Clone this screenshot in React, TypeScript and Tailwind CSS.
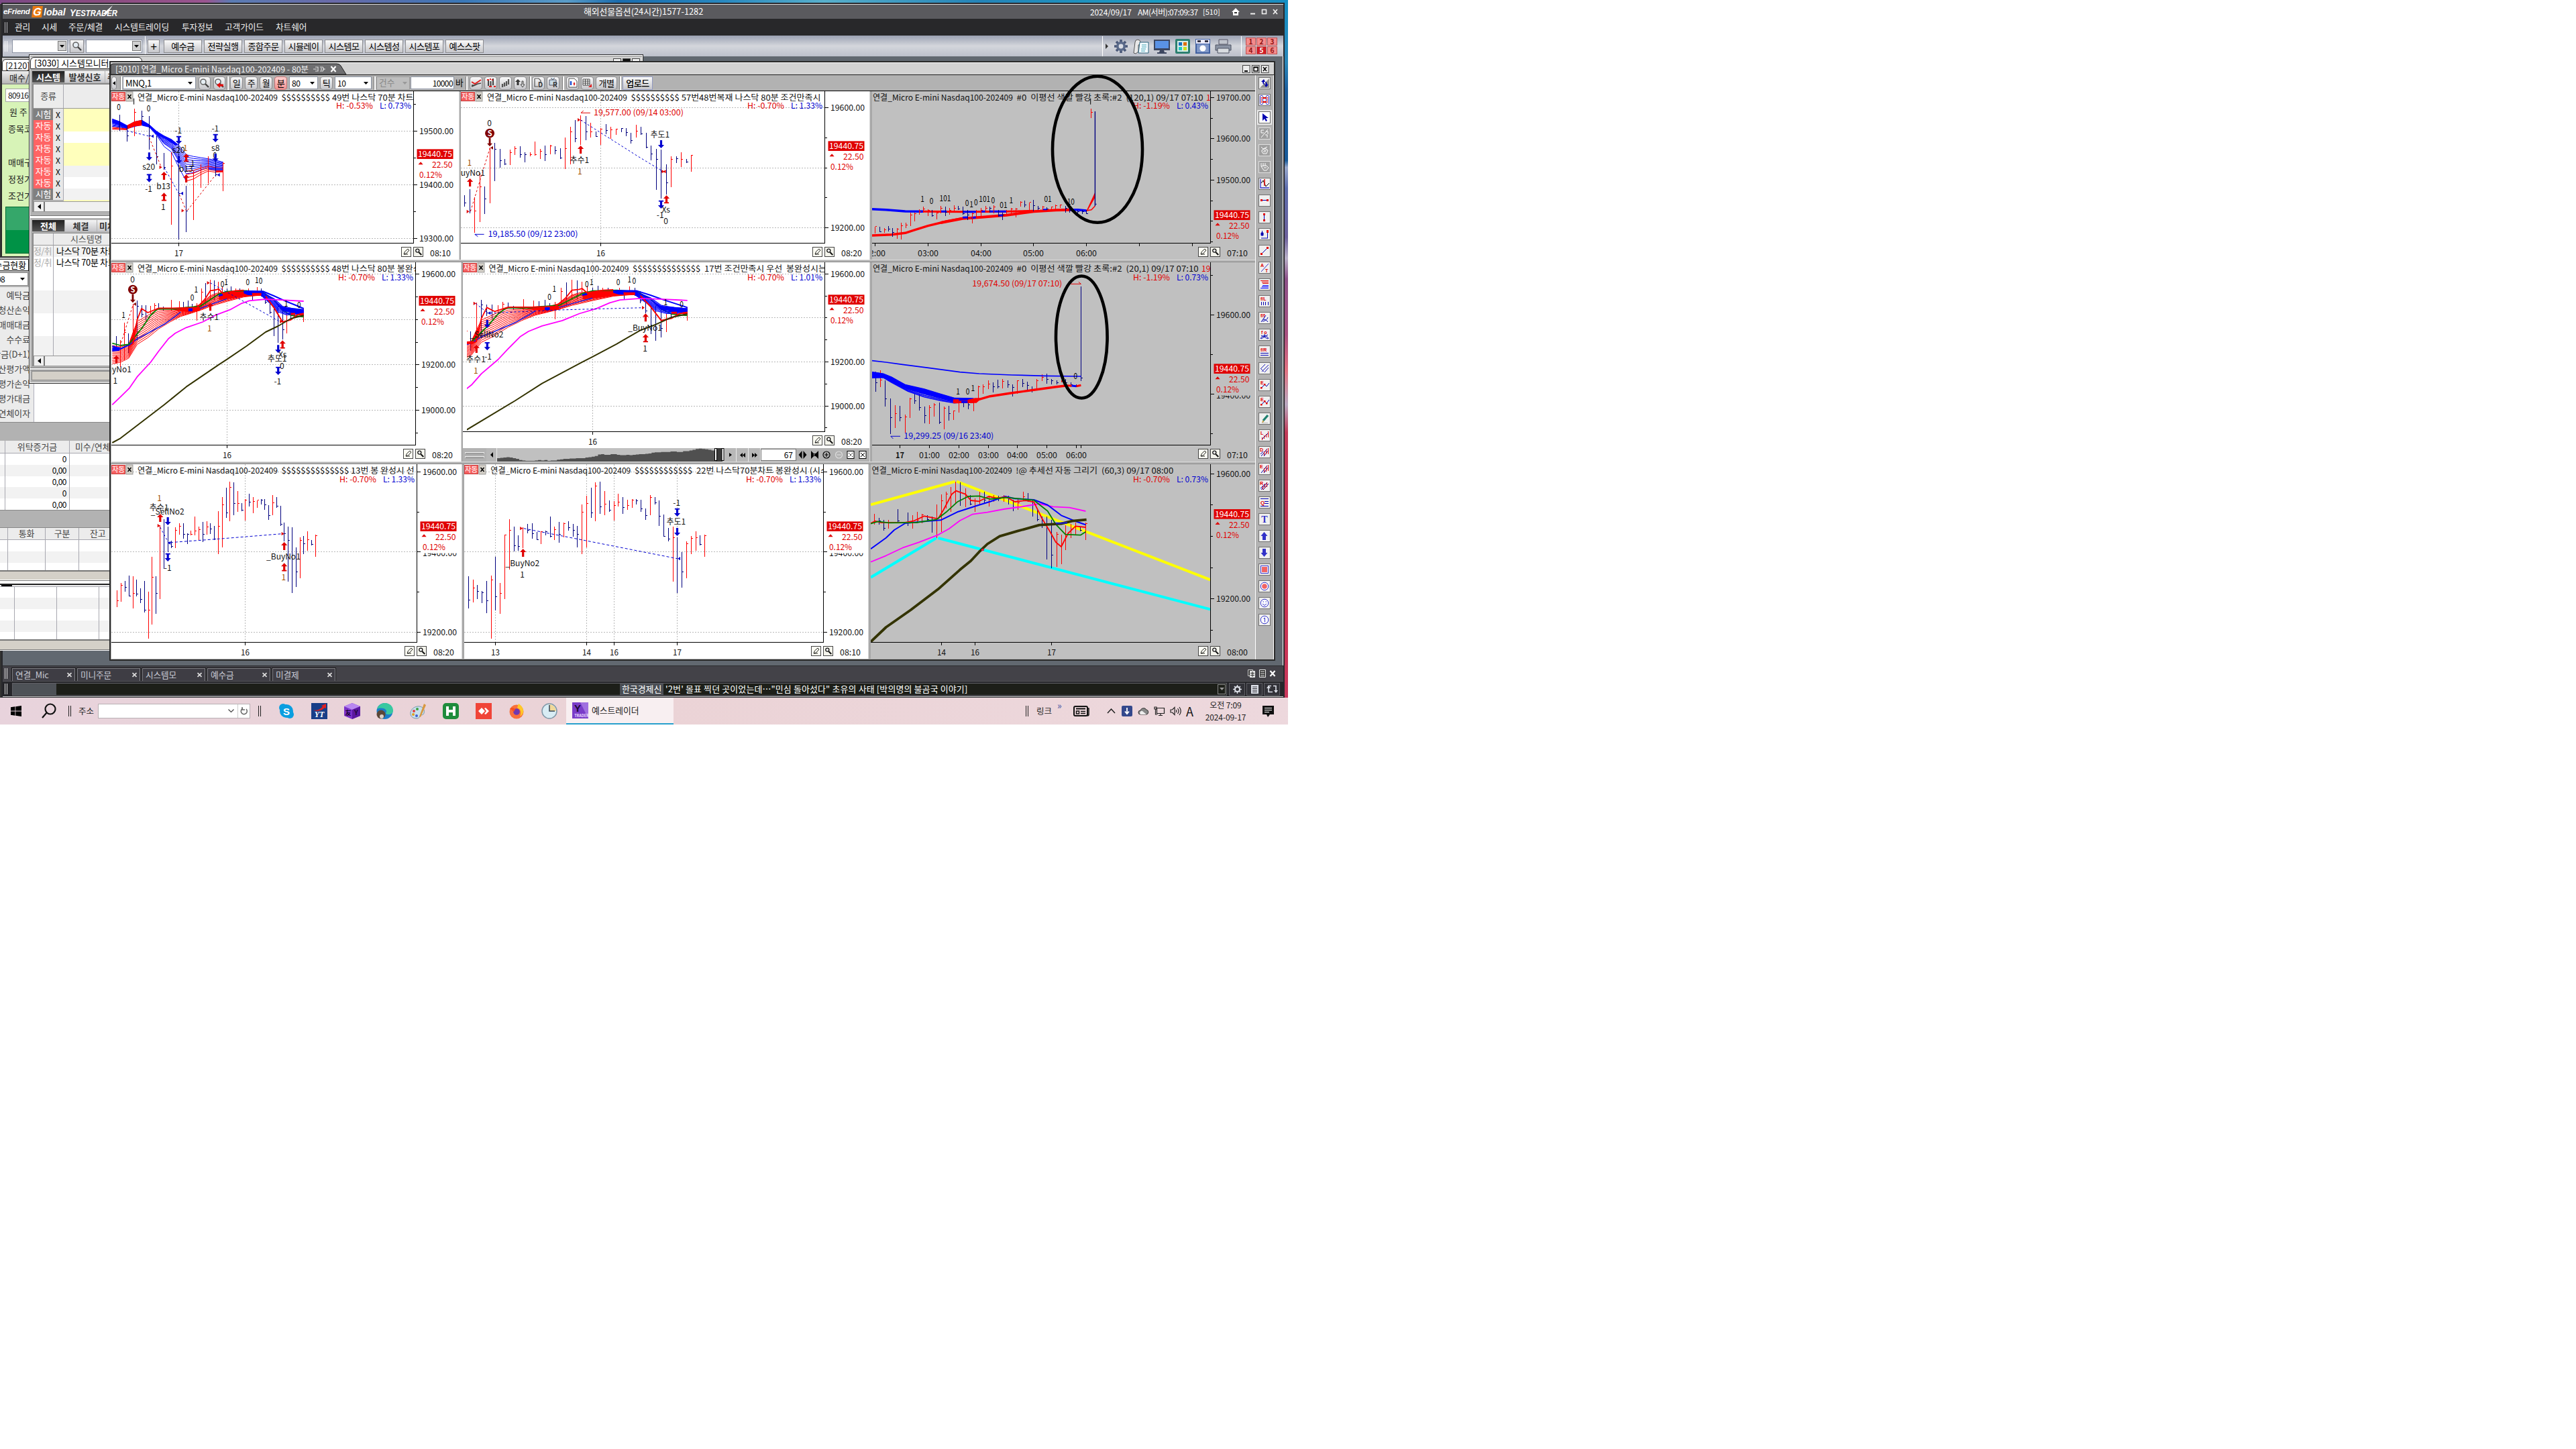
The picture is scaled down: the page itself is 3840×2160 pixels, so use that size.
import React from 'react';

/* ------------------------------------------------------------------ */
/* Plot helpers                                                        */
/* ------------------------------------------------------------------ */

type Pt = [number, number];
type Mapper = (x: number, y: number) => Pt;

const RED = '#ff0000';
const NAVY = '#00007f';
const BLUE = '#0000ff';
const MARK_RED = '#e00000';
const MARK_BLUE = '#0000d0';
const OLIVE = '#333300';
const GREEN = '#008000';
const MAGENTA = '#ff00ff';
const FONT = "'Noto Sans CJK KR', sans-serif";

const grid = (ox: number, oy: number, k: number): Mapper => (x, y) => [ox + x / k, oy + y / 3];

const pts = (s: string): Pt[] =>
  s.trim().split(/\s+/).map((p) => p.split(',').map(Number) as Pt);

const toPath = (m: Mapper, list: Pt[]) =>
  list.map(([x, y], i) => {
    const [a, b] = m(x, y);
    return `${i ? 'L' : 'M'}${a.toFixed(1)} ${b.toFixed(1)}`;
  }).join('');

function Line({ m, d, c, w = 1, dash, crisp }: { m: Mapper; d: string; c: string; w?: number; dash?: string; crisp?: boolean }) {
  return <path d={toPath(m, pts(d))} fill="none" stroke={c} strokeWidth={w} strokeDasharray={dash} strokeLinejoin="round" shapeRendering={crisp ? 'crispEdges' : undefined} />;
}

function Area({ m, d, c }: { m: Mapper; d: string; c: string }) {
  return <path d={toPath(m, pts(d)) + 'Z'} fill={c} />;
}

function yAt(list: Pt[], x: number) {
  if (x <= list[0][0]) return list[0][1];
  for (let i = 1; i < list.length; i++) {
    if (x <= list[i][0]) {
      const [x0, y0] = list[i - 1];
      const [x1, y1] = list[i];
      return y0 + ((y1 - y0) * (x - x0)) / (x1 - x0);
    }
  }
  return list[list.length - 1][1];
}

/* A ribbon of evenly spaced averages between two envelopes. */
function Fan({ m, top, bot, n, c, from = 0, to = 1, w = 1 }: { m: Mapper; top: string; bot: string; n: number; c: string; from?: number; to?: number; w?: number }) {
  const t = pts(top);
  const b = pts(bot);
  const xs = Array.from(new Set([...t, ...b].map((p) => p[0]))).sort((p, q) => p - q);
  return (
    <g>
      {Array.from({ length: n }, (_, i) => {
        const r = from + ((to - from) * i) / (n - 1);
        const list = xs.map((x) => [x, yAt(t, x) * (1 - r) + yAt(b, x) * r] as Pt);
        return <path key={i} d={toPath(m, list)} fill="none" stroke={c} strokeWidth={w} />;
      })}
    </g>
  );
}

/* "r500 567 735 590": colour + x, high, low, close */
function Bars({ m, d }: { m: Mapper; d: string }) {
  const draw = (key: string) =>
    d.split(';').map((s) => s.trim()).filter((s) => s[0] === key).map((s) => {
      const [x, hi, lo, cl] = s.slice(1).trim().split(/\s+/).map(Number);
      const [px, py] = m(x, hi);
      const [, qy] = m(x, lo);
      const fx = Math.floor(px) + 0.5;
      let out = `M${fx} ${Math.round(py)}V${Math.round(qy)}`;
      if (cl !== undefined) {
        const cy = Math.floor(m(x, cl)[1]) + 0.5;
        out += `M${fx} ${cy}h2.5`;
      }
      return out;
    }).join('');
  return (
    <g fill="none" strokeWidth="1" shapeRendering="crispEdges">
      <path d={draw('r')} stroke={RED} />
      <path d={draw('b')} stroke={NAVY} />
    </g>
  );
}

function Label({ m, x, y, t, c = '#111', len, a = 'middle', s = 12 }: { m: Mapper; x: number; y: number; t: string; c?: string; len?: number; a?: 'start' | 'middle' | 'end'; s?: number }) {
  const [px, py] = m(x, y);
  return (
    <text x={px} y={py + 4.4} fill={c} fontSize={s} textAnchor={a} textLength={len} lengthAdjust="spacingAndGlyphs">{t}</text>
  );
}

/* Thin glyph digits used for the regime flips */
function Digit({ m, x, y, t }: { m: Mapper; x: number; y: number; t: string }) {
  const [px, py] = m(x, y);
  return (
    <text x={px} y={py + 4.4} fill="#000" fontSize="12" textAnchor="middle" textLength={t.length * 5.6} lengthAdjust="spacingAndGlyphs">{t}</text>
  );
}

function Arrow({ m, x, y, up, bar, c }: { m: Mapper; x: number; y: number; up?: boolean; bar?: boolean; c?: string }) {
  const [px, py] = m(x, y);
  const color = c ?? (up ? MARK_RED : MARK_BLUE);
  return (
    <g transform={`translate(${px.toFixed(1)} ${py.toFixed(1)})${up ? '' : ' scale(1 -1)'}`} fill={color}>
      <path d="M0 -6L4.6 -1H1.6V6H-1.6V-1H-4.6Z" />
      {bar && <rect x="-3.6" y="4.4" width="7.2" height="1.8" />}
    </g>
  );
}

function Tri({ m, x, y, left, c = MARK_RED }: { m: Mapper; x: number; y: number; left?: boolean; c?: string }) {
  const [px, py] = m(x, y);
  return <path d={left ? `M${px - 2} ${py}l4 -2.6v5.2z` : `M${px + 2} ${py}l-4 -2.6v5.2z`} fill={c} />;
}

function StopMark({ m, x, y }: { m: Mapper; x: number; y: number }) {
  const [px, py] = m(x, y);
  return (
    <g>
      <circle cx={px} cy={py} r="7" fill="#800000" />
      <text x={px} y={py + 4} fontSize="11" fontWeight="700" fill="#fff" textAnchor="middle">S</text>
      <path d={`M${px - 1.4} ${py + 7}h2.8v8h2.6l-4 4.6l-4 -4.6h2.6z`} fill="#800000" />
    </g>
  );
}

/* ------------------------------------------------------------------ */
/* Chart frame                                                         */
/* ------------------------------------------------------------------ */

interface FrameProps {
  x: number; y: number; w: number; h: number;
  m: Mapper;
  gray?: boolean;
  axisX: number;
  axisY: number;
  titleX: number;
  rest: string;
  restLen: number;
  redTail?: string;
  high: string;
  low: string;
  auto?: boolean;
  majors: [number, string][];
  minors: number[];
  hidden?: number;
  price: number;
  vgrid?: number[];
  times: [number, string][];
  ticks: number[];
  end: string;
  children: React.ReactNode;
}

function Frame(p: FrameProps) {
  const ax = Math.floor(p.m(p.axisX, 0)[0]) + 0.5;
  const ay = Math.floor(p.m(0, p.axisY)[1]) + 0.5;
  const yy = (v: number) => Math.floor(p.m(0, v)[1]) + 0.5;
  const xx = (v: number) => Math.floor(p.m(v, 0)[0]) + 0.5;
  const top = p.y;
  const id = `clip${p.x}-${p.y}`;
  const bg = p.gray ? '#c0c0c0' : '#ffffff';
  const py = p.m(0, p.price)[1];
  const ty = top + (p.y > 136 ? 9.8 : 9.3);
  const iy = ay + 5.5;
  const timeY = ay + 14.8;
  return (
    <svg className="block shrink-0" width={p.w} height={p.h} viewBox={`${p.x} ${p.y} ${p.w} ${p.h}`} style={{ fontFamily: FONT }}>
      <rect x={p.x} y={p.y} width={p.w} height={p.h} fill={bg} />
      <clipPath id={id}><rect x={p.x} y={p.y} width={ax - p.x - 0.5} height={ay - p.y} /></clipPath>
      {!p.gray && (
        <g stroke="#b8b8b8" strokeDasharray="2 2" shapeRendering="crispEdges">
          {p.majors.map(([v]) => <path key={v} d={`M${p.x} ${yy(v)}H${ax}`} />)}
          {p.hidden !== undefined && <path d={`M${p.x} ${yy(p.hidden)}H${ax}`} />}
          {(p.vgrid ?? []).map((v) => <path key={v} d={`M${xx(v)} ${p.y}V${ay}`} />)}
        </g>
      )}
      <g clipPath={`url(#${id})`}>
        {p.children}
        <text x={p.titleX} y={ty + 4.4} fontSize="12" fill="#111" textLength="209" lengthAdjust="spacingAndGlyphs">연결_Micro E-mini Nasdaq100-202409</text>
        <text x={p.titleX + 214.6} y={ty + 4.4} fontSize="12" fill="#111" textLength={p.restLen} lengthAdjust="spacingAndGlyphs">{p.rest}</text>
        {p.redTail && <text x={p.titleX + 214.6 + p.restLen + 4.5} y={ty + 4.4} fontSize="12" fill={MARK_RED}>{p.redTail}</text>}
        <text x={ax - 115.5} y={ty + 17} fontSize="12" fill={MARK_RED} textLength="55" lengthAdjust="spacingAndGlyphs">{p.high}</text>
        <text x={ax - 50.5} y={ty + 17} fontSize="12" fill={MARK_BLUE} textLength="47" lengthAdjust="spacingAndGlyphs">{p.low}</text>
      </g>
      {p.auto && (
        <g>
          <rect x={p.x + 0.5} y={top + 1.5} width="20" height="13" fill="#f66060" stroke="#c84040" />
          <text x={p.x + 10.5} y={top + 12.2} fontSize="11" fill="#fff" textAnchor="middle" textLength="19" lengthAdjust="spacingAndGlyphs">자동</text>
          <rect x={p.x + 22} y={top + 1} width="10" height="14" fill="#d4d0c8" stroke="#8a8a8a" strokeWidth="0.8" />
          <path d={`M${p.x + 24.5} ${top + 5}l5 6m0 -6l-5 6`} stroke="#000" strokeWidth="1.5" />
        </g>
      )}
      <path d={`M${ax} ${p.y}V${ay}H${p.x}`} fill="none" stroke="#000" shapeRendering="crispEdges" />
      <g stroke="#000" shapeRendering="crispEdges">
        {p.majors.map(([v]) => <path key={v} d={`M${ax} ${yy(v)}h5`} />)}
        {p.hidden !== undefined && <path d={`M${ax} ${yy(p.hidden)}h5`} />}
        {p.minors.map((v) => <path key={v} d={`M${ax} ${yy(v)}h3.5`} />)}
        {p.ticks.map((v) => <path key={v} d={`M${xx(v)} ${ay}v4`} />)}
      </g>
      {p.majors.map(([v, t]) => (
        <text key={v} x={ax + 8.5} y={yy(v) + 4.6} fontSize="12" fill="#111" textLength="51" lengthAdjust="spacingAndGlyphs">{t}</text>
      ))}
      {p.hidden !== undefined && (
        <g>
          <text x={ax + 8.5} y={py + 44.3} fontSize="12" fill="#111" textLength="51" lengthAdjust="spacingAndGlyphs">19400.00</text>
          <rect x={ax + 6} y={py + 30} width="54" height="10" fill={bg} />
        </g>
      )}
      <rect x={ax + 5} y={py - 7.3} width="54" height="14.6" fill={MARK_RED} />
      <text x={ax + 6.5} y={py + 4.4} fontSize="12" fill="#fff" textLength="51" lengthAdjust="spacingAndGlyphs">19440.75</text>
      <path d={`M${ax + 7} ${py + 15.6}l3.6 -4l3.6 4z`} fill={MARK_RED} />
      <text x={ax + 58} y={py + 20.2} fontSize="12" fill={MARK_RED} textAnchor="end" textLength="30.5" lengthAdjust="spacingAndGlyphs">22.50</text>
      <text x={ax + 8.5} y={py + 35.5} fontSize="12" fill={MARK_RED} textLength="34" lengthAdjust="spacingAndGlyphs">0.12%</text>
      {p.times.map(([v, t]) => (
        <text key={v} x={xx(v)} y={timeY + 4.6} fontSize="12" fill="#111" textAnchor="middle" fontWeight={t === '17' && p.times.length > 5 ? 700 : 400} textLength={t.length > 2 ? 31 : 13} lengthAdjust="spacingAndGlyphs">{t}</text>
      ))}
      <text x={ax + 24.5} y={timeY + 4.6} fontSize="12" fill="#111" textLength="31" lengthAdjust="spacingAndGlyphs">{p.end}</text>
      <g transform={`translate(${ax - 18.5} ${iy})`}>
        <rect x="0.5" y="0.5" width="14" height="14" fill="#fffff4" stroke="#444" />
        <path d="M4 11l1.5-4L10 3l2 2-4.5 5z M4 11h6" fill="none" stroke="#222" strokeWidth="1" />
        <rect x="18.5" y="0.5" width="14" height="14" fill="#f4f4ec" stroke="#444" />
        <circle cx="24.3" cy="5.6" r="2.5" fill="#fff" stroke="#111" strokeWidth="1.3" />
        <path d="M26.3 8l4 4" stroke="#111" strokeWidth="2" />
      </g>
    </svg>
  );
}

/* ------------------------------------------------------------------ */
/* Charts                                                              */
/* ------------------------------------------------------------------ */

const B10 = '$$$$$$$$$$';

function ChartA1() {
  const m = grid(0, 0, 2.45);
  const top = '410,533 437,545 464,563 491,545 518,538 545,560 572,590 599,610 626,625 653,650 680,692 707,700 734,705 760,710 787,716 815,725';
  const bot = '410,578 437,578 464,580 491,574 518,566 545,568 572,605 599,655 626,680 653,748 680,810 707,800 734,780 760,765 787,770 815,768';
  return (
    <Frame x={166} y={136} w={518} h={251} m={m} axisX={1511} axisY={1086} titleX={205} rest={`${B10} 49번 나스닥 70분 차트`} restLen={197}
      high="H: -0.53%" low="L: 0.73%" auto majors={[[587, '19500.00'], [827, '19400.00'], [1067, '19300.00']]} minors={[466, 707, 946]} price={689}
      vgrid={[653]} times={[[653, '17']]} ticks={[653]} end="08:10">
      <Fan m={m} top={top} bot={bot} n={9} c={BLUE} to={0.72} />
      <Fan m={m} top="680,692 707,700 734,705 760,710 787,716 815,725" bot="680,810 707,800 734,780 760,765 787,770 815,768" n={4} c={RED} from={0.62} />
      <Fan m={m} top="410,533 464,563" bot="410,578 464,580" n={3} c={RED} from={0.8} />
      <Line m={m} d="545,568 572,605 599,655 626,680 653,748 680,810" c={BLUE} />
      <Area m={m} d="410,530 437,542 464,560 464,572 437,560 410,550" c={BLUE} />
      <Area m={m} d="464,560 491,543 518,536 518,562 491,565 464,578" c={RED} />
      <Area m={m} d="518,536 545,556 572,586 599,606 626,622 653,648 640,650 599,618 572,600 545,570 518,562" c={BLUE} />
      <Area m={m} d="760,748 787,750 815,752 815,762 787,762 760,758" c="#3030ff" />
      <Line m={m} d="787,767 815,766" c={RED} w={2.5} />
      <Bars m={m} d="b437 513 585;b464 560 632 607;r491 487 608 502;b518 495 555 520;b545 520 670 608;b572 605 735 700;b599 685 760 748;r626 680 1004 742;b653 640 1070 865;b680 830 1038 942;r707 765 984;r734 735 840;r760 700 820;b787 720 790 780;r815 725 855 730" />
      <Line m={m} d="489,440 489,467" c="#000" />
      <Line m={m} d="464,585 548,610" c={MARK_BLUE} dash="3 3" />
      <Line m={m} d="545,615 590,750" c={MARK_RED} dash="3 3" />
      <Line m={m} d="600,750 653,865" c={MARK_BLUE} dash="3 3" />
      <Line m={m} d="655,870 680,942" c={MARK_RED} dash="3 3" />
      <Line m={m} d="685,940 787,783" c={MARK_RED} dash="3 3" />
      <Tri m={m} x={587} y={748} /><Tri m={m} x={668} y={942} />
      <Tri m={m} x={556} y={609} left c={MARK_BLUE} /><Tri m={m} x={664} y={865} left c={MARK_BLUE} /><Tri m={m} x={798} y={782} left c={MARK_BLUE} />
      <Digit m={m} x={434} y={480} t="0" /><Digit m={m} x={543} y={486} t="0" />
      <Arrow m={m} x={545} y={700} /><Label m={m} x={543} y={746} t="s20" />
      <Arrow m={m} x={545} y={797} bar /><Label m={m} x={543} y={845} t="-1" />
      <Arrow m={m} x={599} y={786} up /><Label m={m} x={597} y={832} t="b13" />
      <Arrow m={m} x={599} y={880} up bar /><Label m={m} x={596} y={926} t="1" />
      <Label m={m} x={651} y={584} t="-1" /><Arrow m={m} x={653} y={627} bar />
      <Label m={m} x={652} y={671} t="s20" /><Label m={m} x={677} y={663} t="1" c="#c06000" />
      <Arrow m={m} x={680} y={705} up bar /><Arrow m={m} x={653} y={714} />
      <Label m={m} x={679} y={755} t="b13" /><Arrow m={m} x={680} y={798} up />
      <Label m={m} x={786} y={575} t="-1" /><Arrow m={m} x={787} y={618} bar />
      <Label m={m} x={787} y={662} t="s8" /><Digit m={m} x={785} y={695} t="0" /><Arrow m={m} x={787} y={706} />
      <Digit m={m} x={704} y={730} t="1" />
    </Frame>
  );
}

function ChartA2() {
  const m = grid(640, 0, 2.376);
  return (
    <Frame x={687} y={136} w={609} h={251} m={m} axisX={1401} axisY={1086} titleX={725.9} rest={`${B10} 57번48번복재 나스닥 80분 조건만족시`} restLen={283}
      high="H: -0.70%" low="L: 1.33%" auto majors={[[482, '19600.00'], [1018, '19200.00']]} minors={[617, 751, 883]} price={653}
      vgrid={[607]} times={[[607, '16']]} ticks={[607]} end="08:20">
      <Line m={m} d="112,751 1401,751" c="#b8b8b8" dash="2 2" crisp />
      <Bars m={m} d="b125 873 923 908;b144 845 953;r161 883 1040 943;r180 775 992 835;b197 833 957 889;r215 660 909;b232 640 809 667;b251 667 750 718;b268 710 738 733;r286 668 738 683;r304 654 692 663;b323 654 705 690;b339 680 725 692;r358 682 698 692;r375 633 695 692;r393 667 710 677;b411 652 720 690;r429 648 690 653;b446 655 690 672;b465 662 710 707;r482 615 755 663;r500 567 735 590;b517 537 635 620;r536 515 648 537;b555 520 628 590;r572 548 614 589;b591 588 613 610;r607 573 648 577;b626 556 600 582;r643 567 622 581;r662 575 603 577;b680 572 590 575;b697 572 608 592;b715 594 642 629;r733 558 615 587;b750 567 603 598;b769 595 662 659;b786 652 717 688;b804 667 849 712;b821 670 888 767;b840 736 870 818;r857 700 836 712;b876 700 730 710;r892 682 747 712;b912 710 728 725;r929 693 768 694" />
      <Line m={m} d="146,945 215,660" c={MARK_RED} dash="3 3" />
      <Line m={m} d="536,537 740,700 828,767" c={MARK_BLUE} dash="3 3" />
      <Tri m={m} x={137} y={946} /><Tri m={m} x={221} y={661} left c="#800000" /><Tri m={m} x={530} y={536} /><Tri m={m} x={828} y={767} /><Tri m={m} x={833} y={767} left />
      <Label m={m} x={142} y={727} t="1" c="#a05000" /><Label m={m} x={197} y={773} t="_BuyNo1" a="end" />
      <Arrow m={m} x={144} y={816} up />
      <Label m={m} x={213} y={550} t="0" /><StopMark m={m} x={214} y={596} />
      <Arrow m={m} x={536} y={669} up /><Label m={m} x={532} y={716} t="추수1" /><Label m={m} x={533} y={767} t="1" c="#a05000" />
      <Label m={m} x={817} y={601} t="추도1" /><Arrow m={m} x={821} y={645} />
      <Arrow m={m} x={821} y={915} bar /><Arrow m={m} x={840} y={891} up bar />
      <Label m={m} x={838} y={938} t="Xs" /><Label m={m} x={818} y={962} t="-1" /><Label m={m} x={838} y={989} t="0" />
      <Label m={m} x={582} y={504} t="19,577.00 (09/14 03:00)" c={MARK_RED} a="start" len={134} />
      <Line m={m} d="546,495 537,505 570,505" c={MARK_RED} />
      <Label m={m} x={208} y={1047} t="19,185.50 (09/12 23:00)" c={MARK_BLUE} a="start" len={134} />
      <Line m={m} d="172,1058 161,1048 194,1048" c={MARK_BLUE} />
    </Frame>
  );
}

function ChartA3() {
  const m = grid(1280, 0, 2.45);
  return (
    <Frame x={1300} y={136} w={571} h={251} m={m} gray axisX={1285} axisY={1086} titleX={1301} rest={'#0\u00a0 이평선 색깔 빨강 초록:#2\u00a0 (120,1) 09/17 07:10'} restLen={278} redTail="1"
      high="H: -1.19%" low="L: 0.43%" majors={[[437, '19700.00'], [620, '19600.00'], [806, '19500.00']]} minors={[529, 713, 898, 988, 1080]} price={962}
      times={[[60, '02:00'], [253, '03:00'], [447, '04:00'], [638, '05:00'], [832, '06:00']]} ticks={[60, 253, 447, 638, 832, 1025, 1219]} end="07:10">
      <Line m={m} d="49,935 100,938 170,945 235,946" c={BLUE} w={3.4} />
      <Line m={m} d="235,946 380,947 541,946 640,943" c={RED} w={3} />
      <Line m={m} d="301,946 321,946" c={BLUE} w={3} /><Line m={m} d="380,947 430,947" c={BLUE} w={3} />
      <Line m={m} d="447,946 462,946" c={BLUE} w={3} /><Line m={m} d="480,946 541,946" c={BLUE} w={3} />
      <Line m={m} d="49,1053 120,1049 170,1042 200,1030 253,1010 320,990 380,976" c={RED} w={3.4} />
      <Line m={m} d="300,996 380,977 450,971 540,962 640,946 720,940 775,938" c={RED} w={4} />
      <Line m={m} d="380,973 398,972" c={BLUE} w={3} /><Line m={m} d="412,974 428,972" c={BLUE} w={3} /><Line m={m} d="510,964 525,963" c={BLUE} w={3} />
      <Line m={m} d="672,937 688,937" c={BLUE} w={2} />
      <Line m={m} d="772,938 800,938 832,942" c={BLUE} w={3.4} />
      <Area m={m} d="832,942 863,860 863,885 838,938" c={RED} />
      <Line m={m} d="832,942 850,938 863,922" c={RED} w={1.6} />
      <Bars m={m} d="r60 1013 1045 1013;b77 1013 1037 1037;r94 1020 1040 1028;b110 1012 1035 1025;b124 1020 1058 1040;r142 1020 1068 1025;r155 997 1070 1010;r173 995 1020 1005;r190 952 1012 960;r205 952 990 955;r221 935 960 945;r236 925 950 935;r253 935 965 940;b268 940 970 965;r285 948 982 952;r301 920 955 930;b317 925 965 950;r332 930 960 940;r348 918 945 930;b365 922 940 935;b380 925 960 955;b397 940 985 960;r415 950 1000 955;r431 940 975 945;r447 930 965 940;r464 920 945 930;b480 925 950 930;r494 918 955 925;b510 940 970 965;b525 950 983 960;r540 940 965 945;r558 930 955 935;r575 930 972 935;r592 900 925 905;b607 897 927 915;r624 905 938 905;b638 893 945 918;b655 920 938 930;r672 920 940 925;b688 928 940 935;r705 925 945 925;r720 915 935 918;r737 915 930 915;b755 920 950 930;b770 925 950 940;b786 935 955 945;b800 940 955 945;b817 940 957 945;b832 938 957 955;r849 487 528 503" />
      <Line m={m} d="863.5,498 863.5,922" c={NAVY} w={1.4} /><Line m={m} d="863,913 869,913" c={NAVY} />
      <Line m={m} d="847,440 847,467" c="#000" />
      <Digit m={m} x={233} y={891} t="1" /><Digit m={m} x={266} y={900} t="0" /><Digit m={m} x={316} y={888} t="101" />
      <Digit m={m} x={396} y={909} t="0" /><Digit m={m} x={412} y={913} t="1" /><Digit m={m} x={428} y={906} t="0" />
      <Digit m={m} x={460} y={890} t="101" /><Digit m={m} x={491} y={897} t="0" /><Digit m={m} x={529} y={918} t="01" /><Digit m={m} x={557} y={897} t="1" />
      <Digit m={m} x={691} y={891} t="01" /><Digit m={m} x={775} y={903} t="10" />
    </Frame>
  );
}

/* 80-minute series with its averages, shared by the two middle charts */
function Ribbon({ m }: { m: Mapper }) {
  return (
    <g>
      <Bars m={m} d="b425 362 410;r440 380 500;r455 303 470 347;b470 350 440;r486 218 400;b501 205 385 228;b517 225 280 265;b533 225 290 275;r550 228 265;r565 215 250 225;b580 217 240;b596 232 250;r626 200 250;r655 208 250 240;b671 210 245 240;b688 205 255 245;b703 220 255 250;r719 215 293;r737 150 240 165;b752 125 225;r768 112 205;b783 115 200 185;r798 120 180;r813 140 175;b829 150 180;b845 140 185;r860 150 180;b875 150 175;r908 150 180;b923 160 200;r939 143 180;b954 150 185;b970 165 220 210;b986 195 265 255;b1001 230 362;b1016 230 393;b1032 240 378 335;r1047 265 352;b1062 265 290;r1078 250 280;b1093 250 270;r1109 240 300" />
      <Fan m={m} n={12} c={RED} w={1} top="410,405 440,412 470,400 486,345 501,298 540,270 565,252 580,244 640,240 700,235 730,222 768,182 790,172 829,165 890,160 955,165"
        bot="410,487 440,480 470,462 486,430 501,400 540,370 580,330 620,300 660,275 700,260 737,245 768,230 829,208 890,188 955,178" />
      <Area m={m} d="470,398 486,350 492,330 494,380 486,400 470,410" c={RED} />
      <Area m={m} d="800,180 829,168 890,158 955,165 955,182 890,186 829,198 800,202" c={RED} />
      <Area m={m} d="620,238 690,232 730,232 730,250 690,256 640,248" c={RED} />
      <Line m={m} d="410,408 440,420 475,400" c={BLUE} w={2} />
      <Line m={m} d="475,400 501,375 540,350 600,310 640,275 660,255" c="#2020e0" w={1.6} />
      <Line m={m} d="730,240 768,222 829,196" c="#2020e0" w={1.4} />
      <Area m={m} d="688,232 703,232 703,252 688,252" c={BLUE} />
      <Line m={m} d="798,180 813,176" c={BLUE} w={4} />
      <Line m={m} d="410,395 440,405 470,400 490,370 520,325 550,270 575,242 640,242 680,235 730,230 768,200 800,175 829,163 900,160 960,167 1000,200 1030,245 1062,270 1109,277" c={GREEN} w={1.8} />
      <Line m={m} d="486,395 501,290 517,240 540,258 580,238 650,238 720,235 750,195 768,160 790,156 798,152 813,172 860,160 890,158" c={RED} w={1.8} />
      <Area m={m} d="890,160 920,162 960,166 960,182 906,180 890,172" c={BLUE} />
      <Area m={m} d="920,170 955,170 955,182 922,184" c={RED} />
      <Fan m={m} n={8} c={BLUE} w={1.2} top="955,165 1000,195 1032,230 1070,240 1109,245" bot="955,182 985,215 1016,255 1047,268 1109,265" />
      <Area m={m} d="1000,205 1030,232 1109,243 1109,262 1060,258 1030,248" c={BLUE} />
      <Line m={m} d="900,162 960,163 1000,183 1040,205 1080,225 1109,240" c={BLUE} w={2} />
      <Line m={m} d="970,185 1000,235 1032,300 1062,290 1085,268 1109,262" c={RED} w={2} />
      <Line m={m} d="1062,264 1078,264" c={RED} w={3} /><Line m={m} d="1095,266 1109,266" c={RED} w={3} />
      <Line m={m} d="410,670 440,635 473,595 501,545 550,480 580,430 615,375 640,350 680,325 740,300 790,268 840,245 880,218 910,205 970,198 1040,202 1109,207" c={MAGENTA} w={1.8} />
      <Line m={m} d="410,840 440,820 600,670 680,590 800,490 829,467 900,408 970,345 1016,318 1062,285 1109,270" c={OLIVE} w={2} />
      <Digit m={m} x={702} y={190} t="0" /><Digit m={m} x={716} y={155} t="1" /><Digit m={m} x={812} y={132} t="0" /><Digit m={m} x={826} y={122} t="1" />
      <Digit m={m} x={905} y={122} t="0" /><Digit m={m} x={938} y={112} t="1" /><Digit m={m} x={952} y={117} t="0" />
      <Digit m={m} x={1045} y={217} t="1" /><Digit m={m} x={1092} y={225} t="0" />
    </g>
  );
}

function ChartB1() {
  const m = grid(0, 380, 2.45);
  return (
    <Frame x={166} y={391} w={521} h={297} m={m} axisX={1518} axisY={850} titleX={205} rest={`${B10} 48번 나스닥 80분 봉완성`} restLen={208}
      high="H: -0.70%" low="L: 1.33%" auto majors={[[85, '19600.00'], [490, '19200.00'], [694, '19000.00']]} minors={[187, 290, 391, 592, 797]} price={205}
      vgrid={[829]} times={[[829, '16']]} ticks={[829]} end="08:20">
      <Line m={m} d="407,290 1518,290" c="#b8b8b8" dash="2 2" crisp />
      <Ribbon m={m} />
      <Area m={m} d="410,415 437,412 437,428 410,432" c={BLUE} />
      <Line m={m} d="768,125 1025,300" c={MARK_BLUE} dash="3 3" />
      <Line m={m} d="438,410 486,222" c={MARK_RED} dash="3 3" />
      <Tri m={m} x={761} y={125} /><Tri m={m} x={492} y={220} left c="#800000" /><Tri m={m} x={1027} y={298} />
      <Label m={m} x={484} y={110} t="0" /><StopMark m={m} x={485} y={155} />
      <Digit m={m} x={451} y={270} t="1" />
      <Arrow m={m} x={768} y={232} up /><Label m={m} x={764} y={277} t="추수1" /><Label m={m} x={765} y={328} t="1" c="#a05000" />
      <Arrow m={m} x={425} y={467} up /><Label m={m} x={480} y={512} t="_BuyNo1" a="end" /><Label m={m} x={421} y={562} t="1" />
      <Arrow m={m} x={1016} y={421} /><Arrow m={m} x={1032} y={400} up bar /><Label m={m} x={1032} y={445} t="Xs" />
      <Label m={m} x={1012} y={465} t="추도1" /><Label m={m} x={1030} y={497} t="0" /><Arrow m={m} x={1016} y={519} bar /><Label m={m} x={1014} y={566} t="-1" />
    </Frame>
  );
}

function ChartB2() {
  const m = grid(640, 380, 2.376);
  const r: Mapper = (x, y) => m(578 + (x - 829) * 1.2, 85 + (y - 85) * 0.97);
  return (
    <Frame x={690} y={391} w={606} h={277} m={m} axisX={1401} axisY={790} titleX={728.4} rest={'$$$$$$$$$$$$$$\u00a0 17번 조건만족시 우선\u00a0 봉완성시는'} restLen={289}
      high="H: -0.70%" low="L: 1.01%" auto majors={[[85, '19600.00'], [478, '19200.00'], [676, '19000.00']]} minors={[183, 280, 380, 577, 772]} price={200}
      vgrid={[578]} times={[[578, '16']]} ticks={[578]} end="08:20">
      <Line m={m} d="119,280 1401,280" c="#b8b8b8" dash="2 2" crisp />
      <clipPath id="ribbon-right"><rect x="696" y="391" width="600" height="277" /></clipPath>
      <g clipPath="url(#ribbon-right)"><Ribbon m={r} /></g>
      <Area m={m} d="133,387 158,385 158,397 133,399" c={RED} />
      <Line m={m} d="215,260 460,246 755,236" c={MARK_BLUE} dash="3 3" />
      <Line m={m} d="164,217 205,258" c={MARK_BLUE} dash="3 3" />
      <Tri m={m} x={161} y={217} /><Tri m={m} x={212} y={260} left c={MARK_BLUE} /><Tri m={m} x={758} y={236} />
      <Arrow m={m} x={205} y={309} /><Label m={m} x={203} y={357} t="_SellNo2" /><Arrow m={m} x={205} y={409} bar /><Label m={m} x={208} y={455} t="-1" />
      <Arrow m={m} x={167} y={420} up /><Label m={m} x={165} y={466} t="추수1" /><Label m={m} x={165} y={517} t="1" c="#a05000" />
      <Arrow m={m} x={766} y={280} up /><Label m={m} x={764} y={327} t="_BuyNo1" /><Arrow m={m} x={766} y={372} up bar /><Label m={m} x={764} y={419} t="1" />
    </Frame>
  );
}

function ChartB3() {
  const m = grid(1280, 380, 2.45);
  return (
    <Frame x={1300} y={391} w={571} h={297} m={m} gray axisX={1285} axisY={850} titleX={1301} rest={'#0\u00a0 이평선 색깔 빨강 초록:#2\u00a0 (20,1) 09/17 07:10'} restLen={271} redTail="19"
      high="H: -1.19%" low="L: 0.73%" majors={[[268, '19600.00']]} minors={[92, 445, 799]} hidden={622} price={509}
      times={[[150, '17'], [258, '01:00'], [366, '02:00'], [474, '03:00'], [580, '04:00'], [687, '05:00'], [795, '06:00']]} ticks={[150, 258, 366, 474, 580, 687, 795, 812]} end="07:10">
      <Bars m={m} d="b63 522 613 570;r80 517 590 558;b97 560 678 643;b117 643 802 727;r134 672 773 708;b151 675 745 727;r170 713 795 723;r188 640 728 643;b205 620 665 652;b222 625 696 682;b241 678 752 718;r258 672 757 682;r275 662 722 670;b295 660 757 748;r313 678 779 685;b330 675 740 708;r347 697 738 697;r366 655 705;b383 655 680;b401 655 690 670;r420 655 698;r438 585 650 590;r455 578 620 588;r474 560 600 578;b491 570 615 590;b508 557 598 590;r525 555 598 565;b545 560 595 580;b562 578 632 592;r580 562 620 562;b600 555 592 575;b616 568 605 583;b633 587 615 600;r650 555 600 562;r670 535 563 547;b687 531 575 555;b705 555 578 563;b724 560 580 570;r742 560 570 565;b757 555 580 570;b775 570 590 580;b795 578 592 585;b812 142 565 550" />
      <Line m={m} d="49,473 100,480 160,490 260,506 370,524 440,531 560,537 680,541 812,543" c={BLUE} w={1.7} />
      <Fan m={m} n={6} c={BLUE} w={1.6} top="49,524 90,532 120,547 170,582 240,602 300,624 350,642 420,644" bot="49,550 90,548 120,570 180,610 240,635 300,652 350,662 366,660" />
      <Area m={m} d="49,522 90,530 120,545 170,578 240,598 300,620 350,638 420,640 420,655 350,656 300,642 240,622 180,602 120,568 90,548 49,550" c={BLUE} />
      <Area m={m} d="345,646 366,646 366,664 345,664" c={RED} />
      <Line m={m} d="366,658 420,656 440,646 480,632 560,617 640,604 720,590 760,584" c={RED} w={3.4} />
      <Area m={m} d="398,648 425,640 450,640 430,662 398,662" c={RED} />
      <Line m={m} d="375,658 398,658" c={BLUE} w={3} />
      <Line m={m} d="755,584 778,585" c={RED} w={3} /><Line m={m} d="778,585 795,587" c={BLUE} w={3} /><Line m={m} d="795,587 812,583" c={RED} w={3} />
      <Digit m={m} x={363} y={612} t="1" /><Digit m={m} x={398} y={610} t="0" /><Digit m={m} x={417} y={595} t="1" /><Digit m={m} x={792} y={543} t="0" />
      <Label m={m} x={415} y={129} t="19,674.50 (09/17 07:10)" c={MARK_RED} a="start" len={134} />
      <Line m={m} d="775,130 812,130 803,121" c={MARK_RED} />
      <Label m={m} x={165} y={809} t="19,299.25 (09/16 23:40)" c={MARK_BLUE} a="start" len={134} />
      <Line m={m} d="126,822 117,811 152,811" c={MARK_BLUE} />
    </Frame>
  );
}

function ChartC1() {
  const m = grid(0, 680, 2.45);
  return (
    <Frame x={166} y={692} w={522} h={290} m={m} axisX={1523} axisY={832} titleX={205} rest="$$$$$$$$$$$$$$ 13번 봉 완성시 선" restLen={198}
      high="H: -0.70%" low="L: 1.33%" auto majors={[[70, '19600.00'], [787, '19200.00']]} minors={[250, 607]} hidden={428} price={314}
      vgrid={[895]} times={[[895, '16']]} ticks={[895]} end="08:20">
      <Bars m={m} d="r427 600 675 646;r442 568 650 577;b457 558 606 587;b472 534 628 626;r487 538 682 613;b498 553 627 616;b513 591 657 640;b528 558 698 688;r543 606 815 688;r555 450 752 541;b570 538 705 613;r585 310 640;b599 283 505;b613 316 428 388;b626 378 410 402;r641 318 410 330;r656 300 350 313;b671 300 368 348;b685 345 392 350;r697 333 355 350;r711 270 355 333;r726 315 375 328;b741 294 385 350;r756 290 352 315;b768 300 347 325;b783 312 375 370;r797 245 437 313;r812 183 407 217;b827 142 275 253;r839 114 290 138;b854 117 263 211;r869 156 249 211;b883 210 246 241;r895 192 288 197;b910 168 224 205;r925 183 256 202;r940 197 230 197;b954 193 215 197;b967 192 239 217;b981 220 285 265;r996 174 265 207;b1010 183 230 223;b1025 222 311 305;b1038 297 380 346;b1052 316 560 376;b1067 318 611;b1081 408 586 517;r1097 363 545 375;b1109 357 437 391;r1123 336 423 373;b1138 375 398 395;r1153 352 449 355" />
      <Line m={m} d="585,318 615,386" c={MARK_BLUE} dash="3 3" />
      <Line m={m} d="622,386 800,370 1030,347" c={MARK_BLUE} dash="4 3" />
      <Tri m={m} x={580} y={311} /><Tri m={m} x={618} y={388} left c={MARK_BLUE} /><Tri m={m} x={1033} y={347} />
      <Label m={m} x={582} y={187} t="1" c="#a05000" /><Label m={m} x={581} y={231} t="추수1" /><Label m={m} x={612} y={248} t="_SellNo2" />
      <Arrow m={m} x={585} y={276} up /><Arrow m={m} x={613} y={291} /><Arrow m={m} x={613} y={453} bar /><Label m={m} x={613} y={500} t="-1" />
      <Arrow m={m} x={1038} y={402} up /><Label m={m} x={1035} y={450} t="_BuyNo1" /><Arrow m={m} x={1038} y={496} up bar /><Label m={m} x={1036} y={541} t="1" c="#a05000" />
    </Frame>
  );
}

function ChartC2() {
  const m = grid(640, 680, 2.376);
  return (
    <Frame x={692} y={692} w={602} h={290} m={m} axisX={1396} axisY={832} titleX={731.3} rest={'$$$$$$$$$$$$\u00a0 22번 나스닥70분차트 봉완성시 (시스'} restLen={289}
      high="H: -0.70%" low="L: 1.33%" auto majors={[[70, '19600.00'], [787, '19200.00']]} minors={[250, 607]} hidden={428} price={314}
      vgrid={[234, 557, 655, 878]} times={[[234, '13'], [557, '14'], [655, '16'], [878, '17']]} ticks={[234, 557, 655, 878]} end="08:10">
      <Bars m={m} d="b139 537 681 643;r155 552 654 588;b170 577 640 604;b187 602 657 610;b203 558 701 646;r220 534 815 553;b235 450 689 628;r251 568 705 613;r267 352 640 352;r284 282 507 331;b300 315 426 400;b316 354 423 402;r332 318 412;b348 302 345 331;b365 300 368 345;b381 340 375 373;r396 337 393 338;b412 333 355 337;b429 270 362 358;r444 315 375 328;b460 294 386 350;r477 298 362 300;b493 290 333 320;b509 302 360 330;b524 312 407 348;r541 216 437 250;r557 178 407 211;b574 142 275 253;r589 117 290 133;b605 114 257 226;r621 156 264 214;b639 198 248 240;r655 202 288 220;r669 168 224 205;b685 183 257 229;r702 195 240 220;r718 193 230 197;b733 193 215 198;b750 195 249 234;b767 234 284 265;r783 174 265 183;b800 183 217 207;b814 198 311 268;b831 262 359 357;b847 321 380 371;r863 315 560 364;b878 363 611;b895 430 588 517;r911 382 545 390;r928 357 437 367;r944 336 423 364;b959 355 398 395;r976 352 449 355" />
      <Line m={m} d="334,323 878,458" c={MARK_BLUE} dash="4 3" />
      <Tri m={m} x={326} y={323} /><Tri m={m} x={884} y={458} left c={MARK_BLUE} />
      <Arrow m={m} x={332} y={432} up /><Label m={m} x={330} y={479} t="_BuyNo2" /><Label m={m} x={329} y={530} t="1" />
      <Label m={m} x={876} y={209} t="-1" /><Arrow m={m} x={878} y={252} bar /><Label m={m} x={874} y={294} t="추도1" /><Arrow m={m} x={878} y={339} />
    </Frame>
  );
}

function ChartC3() {
  const m = grid(1280, 680, 2.45);
  return (
    <Frame x={1298} y={692} w={573} h={290} m={m} gray axisX={1285} axisY={832} titleX={1299.6} rest={'!@ 추세선 자동 그리기\u00a0 (60,3) 09/17 08:00'} restLen={235}
      high="H: -0.70%" low="L: 0.73%" majors={[[80, '19600.00'], [637, '19200.00']]} minors={[217, 358, 498, 778]} price={259}
      times={[[302, '14'], [425, '16'], [705, '17']]} ticks={[302, 425, 705]} end="08:00">
      <Line m={m} d="44,217 352,113" c="#ffff00" w={4} /><Line m={m} d="358,113 1284,553" c="#ffff00" w={4} />
      <Line m={m} d="44,542 284,366" c="#00ffff" w={4} /><Line m={m} d="290,366 1284,685" c="#00ffff" w={4} />
      <Bars m={m} d="r58 258 305 290;b75 275 305 290;b93 285 332 322;r110 285 325 297;b143 237 300 290;b180 252 312 295;r197 265 325 297;r215 250 300 285;r232 257 300 262;b250 265 290 283;b268 270 342 290;r286 215 366;r303 171 340 200;r320 160 235 168;r337 137 250;r354 115 210 155;b371 118 222;r391 145 228;b408 175 220 215;r425 190 248;r442 160 220;b459 160 210 195;r476 178 225;r494 175 205 183;b512 178 200;r530 175 205;b548 178 215;b565 195 245;r583 190 240 207;r601 160 200 180;b618 165 205;b636 195 270;b653 235 290 283;b670 270 322 308;b687 270 462 300;b704 285 500 443;r724 340 495 348;r740 350 482;r757 310 420;r775 303 365;r792 298 350;b810 315 335 330;r829 298 375 302" />
      <Line m={m} d="44,473 100,445 160,410 220,385 290,352 330,325 370,288 415,260 470,251 530,237 600,225 660,213 710,226 770,230 829,246" c={MAGENTA} w={1.8} />
      <Line m={m} d="44,415 100,365 130,330 170,300 240,292 300,286 360,250 430,222 480,203 535,180 570,190 640,195 690,218 740,265 790,290 829,307" c={BLUE} w={2} />
      <Line m={m} d="44,300 60,290 80,297 170,297 200,290 240,268 290,280 310,240 340,170 355,155 390,170 410,198 440,202 475,180 500,187 540,183 570,204 610,198 640,205 670,280 700,340 720,385 740,405 765,345 792,313 829,318" c={RED} w={1.8} />
      <Line m={m} d="44,302 70,292 110,298 210,297 285,283 320,250 360,205 400,180 440,178 480,192 540,185 640,197 690,245 720,305 755,350 810,353 829,338" c={GREEN} w={1.8} />
      <Line m={m} d="44,830 100,765 190,688 290,595 370,508 410,468 440,428 470,393 515,358 580,335 660,308 740,302 780,290 832,284" c={OLIVE} w={3.8} />
      <Line m={m} d="448,420 458,418" c="#e02040" w={3} /><Line m={m} d="720,301 762,298" c="#2020c0" w={2.4} />
    </Frame>
  );
}

/* ------------------------------------------------------------------ */
/* Small UI parts                                                      */
/* ------------------------------------------------------------------ */

function Chip({ children, className = '' }: { children?: React.ReactNode; className?: string }) {
  return (
    <div className={`flex items-center justify-center shrink-0 border border-[#8c8c90] bg-gradient-to-b from-[#fafafa] to-[#c6c6ca] text-[13px] leading-none text-black whitespace-nowrap tracking-[-0.4px] ${className}`}>
      {children}
    </div>
  );
}

function Caret({ className = 'fill-black' }: { className?: string }) {
  return <svg width="7" height="4" viewBox="0 0 7 4" className={`shrink-0 ${className}`}><path d="M0 0h7L3.5 4z" /></svg>;
}

function Combo({ text, className = '', boxed }: { text?: string; className?: string; boxed?: boolean }) {
  return (
    <div className={`flex items-center justify-between shrink-0 bg-white border border-[#8b93a3] text-[12px] leading-none whitespace-nowrap ${className}`}>
      <span className="pl-[3px] tracking-[-0.3px]">{text}</span>
      {boxed ? (
        <span className="flex h-[15px] w-[13px] mr-px items-center justify-center border border-[#777] bg-[#d0d0d0]"><Caret /></span>
      ) : (
        <span className="pr-1"><Caret /></span>
      )}
    </div>
  );
}

function Sep() {
  return <div className="w-[3px] h-5 shrink-0 border-l border-[#808080] bg-white" />;
}

function Magnifier({ red }: { red?: boolean }) {
  return (
    <svg width="16" height="16" viewBox="0 0 16 16">
      <circle cx="6" cy="6" r="4" fill="#e6eef4" stroke="#666" strokeWidth="1.6" />
      <path d="M9 9l5 5" stroke="#444" strokeWidth="2.4" />
      {red && <path d="M4 11l5-4v2.4h5v3.4H9V15z" fill="#e01010" />}
    </svg>
  );
}

function Grip({ className = 'bg-[#b8b8bc]' }: { className?: string }) {
  return (
    <div className="flex gap-[2px] shrink-0">
      <div className={`w-px h-4 ${className}`} />
      <div className={`w-px h-4 ${className}`} />
    </div>
  );
}

/* ------------------------------------------------------------------ */
/* Application frame                                                   */
/* ------------------------------------------------------------------ */

function TitleBar() {
  return (
    <div className="h-[22px] shrink-0 flex items-center bg-[#5a5a5e] border-t border-[#dcdcdc] text-white">
      <div className="flex items-center pl-px w-[180px] shrink-0 italic font-bold text-white [font-family:'Liberation_Sans',sans-serif]">
        <span className="text-[11.5px] tracking-[-0.3px] w-[43px] shrink-0">eFriend</span>
        <span className="mr-[2px] h-[17px] w-[15px] shrink-0 bg-[#e87810] flex items-center justify-center text-[16px] leading-none -skew-x-6">G</span>
        <span className="text-[14px] leading-none w-[38px] shrink-0">lobal</span>
        <svg width="76" height="20" viewBox="0 0 76 20" className="shrink-0">
          <text x="1" y="16" fill="#fff" fontSize="14.5" fontWeight="900" fontStyle="italic" textLength="71" lengthAdjust="spacingAndGlyphs">Y<tspan fontSize="12.5">ESTRADER</tspan></text>
          <path d="M50 13L65 0l-9 13z" fill="#fff" />
        </svg>
      </div>
      <div className="flex-1 pl-[686px] text-[12.8px] leading-none whitespace-nowrap">해외선물옵션(24시간)1577-1282</div>
      <div className="flex items-center text-[12px] leading-none whitespace-nowrap w-[288px]">
        <span className="w-[71px] tracking-[-0.1px]">2024/09/17</span>
        <span className="w-[97px] tracking-[-0.5px]">AM(서버):07:09:37</span>
        <span className="w-[42px] text-[11px]">[510]</span>
        <svg width="78" height="14" viewBox="0 0 78 14">
          <path d="M7 1l6 6h-2v5H3V7H1z" fill="#fff" /><rect x="5" y="7" width="4" height="2" fill="#333" />
          <path d="M29 9.5h7" stroke="#eee" strokeWidth="2" />
          <rect x="46.5" y="3.5" width="6" height="6" fill="none" stroke="#eee" strokeWidth="1.6" />
          <path d="M63 3l6 7M69 3l-6 7" stroke="#eee" strokeWidth="1.7" />
        </svg>
      </div>
    </div>
  );
}

const menus: [string, string][] = [
  ['관리', 'w-[40px]'], ['시세', 'w-[40px]'], ['주문/체결', 'w-[69px]'], ['시스템트레이딩', 'w-[100px]'],
  ['투자정보', 'w-[64px]'], ['고객가이드', 'w-[76px]'], ['차트쉐어', 'w-[60px]'],
];

function MenuBar() {
  return (
    <div className="h-[25px] shrink-0 flex items-center bg-[#28282a] text-[#f0f0f0] pl-[3px]">
      <Grip />
      <div className="flex pl-[11px] text-[12.7px] leading-none tracking-[-0.1px]">
        {menus.map(([t, w]) => <span key={t} className={`${w} shrink-0 whitespace-nowrap`}>{t}</span>)}
      </div>
    </div>
  );
}

function AppToolbar() {
  return (
    <div className="h-[31px] shrink-0 flex items-center bg-gradient-to-b from-[#9ba1b2] via-[#d4d6dc] to-[#bcc0cb] pl-[3px]">
      <Grip className="bg-white" />
      <div className="flex items-center pl-[7px] w-[205px] shrink-0 gap-[3px]">
        <Combo boxed className="w-[83px] h-[20px]" />
        <Chip className="w-[21px] h-[20px]"><Magnifier /></Chip>
        <Combo boxed className="w-[84px] h-[20px]" />
      </div>
      <div className="w-[4px] h-[30px] shrink-0 border-l border-white" />
      <div className="flex items-center gap-[3px]">
        <Chip className="w-[18px] h-[20px] mr-[3px] text-[17px]">+</Chip>
        {['예수금', '전략실행', '종합주문', '시뮬레이', '시스템모', '시스템성', '시스템포', '예스스팟'].map((t) => (
          <Chip key={t} className="w-[57px] h-[20px] border-[#6c6c70]">{t}</Chip>
        ))}
      </div>
      <div className="flex-1" />
      <div className="flex items-center h-[30px] border-l border-white w-[207px] pl-1">
        <svg width="5" height="8" viewBox="0 0 5 8"><path d="M0 0l4 4-4 4z" fill="#333" /></svg>
        <div className="flex items-center pl-[6px] gap-[6px]">
          <svg width="24" height="24" viewBox="0 0 24 24"><g stroke="#4a5878" strokeWidth="3.6"><path d="M12 2v20M2 12h20M5 5l14 14M19 5L5 19" /></g><circle cx="12" cy="12" r="7" fill="#5a6a8a" /><circle cx="12" cy="12" r="3.4" fill="#d8dce4" /></svg>
          <svg width="24" height="24" viewBox="0 0 24 24"><path d="M3 6a4 4 0 1 1 5 4v10l-4 3-3-1z" fill="#e8e8e8" stroke="#555" /><path d="M10 6h13v16H8z" fill="#f4fbff" stroke="#28607a" /><path d="M13 10h7M13 13h7M12 16h7M12 19h6" stroke="#38a0b0" strokeWidth="1.2" /></svg>
          <svg width="26" height="24" viewBox="0 0 26 24"><rect x="1" y="2" width="24" height="16" fill="#3c4660" /><rect x="3" y="4" width="20" height="11" fill="#5a92e6" /><path d="M10 18h6l1 3h-8zM6 21h14v2H6z" fill="#3c4660" /></svg>
          <svg width="24" height="24" viewBox="0 0 24 24"><rect x="1" y="1" width="22" height="22" rx="2" fill="#2c8070" /><rect x="4" y="4" width="16" height="16" fill="#d8ece8" /><path d="M6 6h5v5H6z" fill="#1870c0" /><path d="M13 6h5v5h-5z" fill="#e07000" /><path d="M6 13h5v5H6z" fill="#20c8c0" /><path d="M13 13h5v5h-5z" fill="#c8e020" /></svg>
          <svg width="24" height="24" viewBox="0 0 24 24"><path d="M1 1h22v22H1z" fill="#4060a0" /><path d="M2 2h20v6H2z" fill="#eef" /><path d="M4 3h5v3H4zM15 3h5v3h-5z" fill="#334" /><path d="M3 9h18v12H3z" fill="#8098c8" /><circle cx="12" cy="15" r="4.6" fill="#fff" /></svg>
          <svg width="25" height="24" viewBox="0 0 25 24"><path d="M6 2h13v7H6z" fill="#c0c4cc" stroke="#556" /><path d="M1 10h23v8H1z" fill="#8c94a4" stroke="#4a5060" /><path d="M4 15h17v7H4z" fill="#d8dce0" stroke="#4a5060" /></svg>
        </div>
      </div>
      <div className="flex items-center h-[30px] border-l border-white w-[63px] pl-[6px]">
        <div className="grid grid-cols-3 gap-px">
          {[1, 2, 3, 4, 5, 6].map((n) => (
            <div key={n} className={`w-[15px] h-3 flex items-center justify-center text-[10px] leading-none font-bold border border-[#c05050] ${n === 5 ? 'bg-[#d01c24] text-white' : 'bg-[#f48c8c] text-[#901010]'}`}>{n}</div>
          ))}
        </div>
      </div>
    </div>
  );
}

function BottomBars() {
  return (
    <>
      <div className="h-[23px] shrink-0 flex items-center bg-[#434248] border-t border-[#2c2c30] pl-[3px]">
        <Grip className="bg-[#e0e0e0]" />
        <div className="flex gap-[3px] pl-[7px] self-end">
          {['연결_Mic', '미니주문', '시스템모', '예수금', '미결제'].map((t) => (
            <div key={t} className="w-[94px] h-[19px] flex items-center justify-between bg-[#3e3d44] border border-b-0 border-[#808086] outline outline-1 outline-[#1a1a1c] text-[#c8cad4] text-[12.7px] leading-none px-1">
              <span className="tracking-[-0.2px]">{t}</span>
              <svg width="7" height="8" viewBox="0 0 7 8"><path d="M.5 1l6 6M6.5 1l-6 6" stroke="#e0e0e0" strokeWidth="1.7" /></svg>
            </div>
          ))}
        </div>
        <div className="flex-1" />
        <svg className="mr-1" width="50" height="16" viewBox="0 0 50 16">
          <path d="M1.5 2.5h7v9h-7z" fill="#333" stroke="#ccc" /><path d="M4.5 4.5h7v9h-7z" fill="#ddd" stroke="#eee" /><path d="M5 7.5h6M5 10.5h6M8 5v8" stroke="#333" />
          <path d="M18.5 2.5h9v11h-9z" fill="#333" stroke="#eee" /><path d="M20 5.5h6M20 8.5h6M20 11.5h6" stroke="#eee" />
          <path d="M34.5 4l7 8M41.5 4l-7 8" stroke="#fff" strokeWidth="2.2" />
        </svg>
      </div>
      <div className="h-[24px] shrink-0 flex items-center bg-[#26262a] border-t border-[#55555a] border-b border-b-[#d8d8d8] pl-[3px]">
        <Grip className="bg-[#e0e0e0]" />
        <div className="ml-[7px] flex items-center h-[19px] w-[1811px] shrink-0 bg-[#1d1f19] border border-[#606066]">
          <div className="w-[65px] h-full shrink-0 bg-[#4e5257]" />
          <div className="w-[840px] shrink-0" />
          <div className="w-[65px] h-full shrink-0 bg-[#4a4e54] flex items-center pl-[3px] text-white text-[12.9px] leading-none whitespace-nowrap overflow-hidden">한국경제신</div>
          <div className="flex-1 pl-[3px] text-white text-[12.9px] leading-none whitespace-nowrap tracking-[0.18px]">'2번' 몰표 찍던 곳이었는데…"민심 돌아섰다" 초유의 사태 [박의명의 불곰국 이야기]</div>
          <div className="w-3 h-[15px] mr-[1px] border border-[#888] flex items-center justify-center"><Caret className="fill-[#999]" /></div>
        </div>
        <div className="flex gap-[2px] pl-[3px]">
          <div className="w-6 h-[19px] border border-[#606066] bg-[#323238] flex items-center justify-center">
            <svg width="13" height="13" viewBox="0 0 13 13"><circle cx="6.5" cy="6.5" r="3.6" fill="none" stroke="#dde0e8" strokeWidth="2.2" /><path d="M6.5 0v3M6.5 10v3M0 6.5h3M10 6.5h3M2 2l2 2M9 9l2 2M11 2L9 4M2 11l2-2" stroke="#dde0e8" strokeWidth="1.5" /></svg>
          </div>
          <div className="w-6 h-[19px] border border-[#606066] bg-[#323238] flex items-center justify-center">
            <svg width="11" height="13" viewBox="0 0 11 13"><rect width="11" height="13" fill="#dde0e8" /><path d="M2 3h7M2 5.5h7M2 8h7M2 10.5h7" stroke="#323238" /></svg>
          </div>
          <div className="w-6 h-[19px] border border-[#606066] bg-[#323238] flex items-center justify-center">
            <svg width="17" height="13" viewBox="0 0 17 13"><path d="M7 1.5H3v9h6M10 1.5h4v9" fill="none" stroke="#dde0e8" strokeWidth="1.6" /><path d="M0 5l3-4 3 4zM11 8l3 4 3-4z" fill="#dde0e8" /></svg>
          </div>
        </div>
      </div>
    </>
  );
}

/* ------------------------------------------------------------------ */
/* Background windows on the left                                      */
/* ------------------------------------------------------------------ */

function OrderWindow() {
  return (
    <div className="absolute left-[2px] top-[85px] w-[60px] h-[300px] bg-[#d7f3b7] border-t border-l border-[#222] overflow-hidden flex flex-col text-[13px] leading-none text-[#222]">
      <div className="h-[20px] shrink-0 bg-[#c8c8c8] pt-[2px]">
        <div className="h-[18px] w-[60px] bg-white border border-[#333] rounded-tl-md flex items-center pl-[4px] text-[13px] tracking-[-0.2px]">[2120]</div>
      </div>
      <div className="h-[20px] shrink-0 flex items-center pl-[11px] bg-gradient-to-b from-[#eeeeee] to-[#b8b8b8] border-b-2 border-[#999]">매수/</div>
      <div className="h-[20px] w-[60px] shrink-0 mt-[6px] ml-[5px] bg-white border border-[#a8a8a8] flex items-center pl-[3px] text-[12px] tracking-[-0.6px]">80916</div>
      <div className="flex flex-col pl-[9px] pt-[2px] whitespace-nowrap">
        <span className="h-[25px] flex items-center pl-[2px]">원 주</span>
        <span className="h-[50px] flex items-start pt-[6px]">종목코</span>
        <span className="h-[25px] flex items-center">매매구</span>
        <span className="h-[25px] flex items-center">정정기</span>
        <span className="h-[25px] flex items-center">조건기</span>
      </div>
      <div className="ml-[5px] mt-[4px] h-[35px] bg-[#35a76a] border-t border-l border-[#006a30] shrink-0" />
      <div className="ml-[5px] h-[35px] bg-[#009246] border-l border-b border-[#006a30] shrink-0" />
    </div>
  );
}

function BalanceWindow() {
  return (
    <div className="absolute left-0 top-[382px] w-[166px] h-[588px] bg-white overflow-hidden flex flex-col text-[12.9px] leading-none text-[#444] whitespace-nowrap">
      <div className="h-[22px] shrink-0 bg-[#c8c8c8] border-t-2 border-[#333]">
        <div className="w-[43px] h-[18px] mt-[2px] bg-white border-y border-r border-[#333] flex items-center justify-end pr-[3px] text-black overflow-hidden"><span>예수금현황</span></div>
      </div>
      <div className="h-[24px] shrink-0 bg-[#b2b2b2] flex items-center">
        <div className="w-[42px] h-[20px] bg-white border border-l-0 border-[#888] flex items-center justify-between pr-1 text-black text-[12px] tracking-[-0.6px]"><span className="-ml-[5px]">98</span><Caret /></div>
      </div>
      <div className="w-[51px] h-[201px] shrink-0 bg-[#ebebeb] border-r border-[#b0b0bc] flex flex-col items-end pr-[5px] pt-px">
        {['예탁금', '청산손익', '매매대금', '수수료', '예탁금(D+1)', '청산평가액', '평가손익', '평가대금', '연체이자'].map((t) => (
          <span key={t} className="h-[22.1px] flex items-center">{t}</span>
        ))}
      </div>
      <div className="h-[28px] shrink-0 bg-[#b2b2b2] border-t border-[#888]" />
      <div className="h-[19px] shrink-0 flex bg-[#ececec] border-b border-[#a8a8b0]">
        <div className="w-2 border-r border-[#a8a8b0]" />
        <div className="w-24 border-r border-[#a8a8b0] flex items-center justify-center">위탁증거금</div>
        <div className="pl-2 flex items-center">미수/연체</div>
      </div>
      {['0', '0,00', '0,00', '0', '0,00'].map((v, i) => (
        <div key={i} className={`h-[16.8px] shrink-0 flex text-black text-[12px] ${i % 2 ? 'bg-[#f2f2f2]' : 'bg-white'}`}>
          <div className="w-2 border-r border-[#a8a8b0]" />
          <div className="w-24 border-r border-[#a8a8b0] flex items-center justify-end pr-1 tracking-[-0.5px]">{v}</div>
        </div>
      ))}
      <div className="h-[27px] shrink-0 bg-[#b2b2b2] border-y border-[#888]" />
      <div className="h-[18px] shrink-0 flex bg-[#ececec] border-b border-[#a8a8b0]">
        <div className="w-3 border-r border-[#a8a8b0]" />
        <div className="w-14 border-r border-[#a8a8b0] flex items-center justify-center">통화</div>
        <div className="w-[50px] border-r border-[#a8a8b0] flex items-center justify-center">구분</div>
        <div className="flex items-center pl-4">잔고</div>
      </div>
      {[0, 1, 2].map((i) => (
        <div key={i} className={`shrink-0 flex ${i === 2 ? 'h-[11px]' : 'h-[17px]'} ${i % 2 ? 'bg-[#f2f2f2]' : 'bg-white'}`}>
          <div className="w-3 border-r border-[#a8a8b0]" />
          <div className="w-14 border-r border-[#a8a8b0]" />
          <div className="w-[50px] border-r border-[#a8a8b0]" />
        </div>
      ))}
      <div className="h-[14px] shrink-0 bg-[#d4d0c8] border-t-2 border-[#777]" />
      <div className="h-[5px] shrink-0 bg-white border-t border-[#777] mt-px" />
      <div className="h-[4px] shrink-0 bg-[#eee] border-t-2 border-[#222]"><div className="w-4 h-[2px] ml-[2px] bg-black" /></div>
      {[0, 1, 2, 3, 4].map((i) => (
        <div key={i} className={`shrink-0 flex ${i === 4 ? 'h-[11px]' : 'h-[17px]'} ${i % 2 ? 'bg-[#f2f2f2]' : 'bg-white'} ${i ? '' : 'border-t border-[#a8a8b0]'}`}>
          <div className="w-[22px] border-r border-[#a8a8b0]" />
          <div className="w-[63px] border-r border-[#a8a8b0]" />
          <div className="w-[63px] border-r border-[#a8a8b0]" />
        </div>
      ))}
      <div className="h-[15px] shrink-0 bg-[#d4d0c8] border-t-2 border-[#777]" />
      <div className="h-[4px] shrink-0 bg-white border-y border-[#777]" />
    </div>
  );
}

const signalRows: [string, string][] = [
  ['시험', 'bg-[#ffffbc]'], ['자동', 'bg-[#ffffbc]'], ['자동', 'bg-white'], ['자동', 'bg-[#ffffbc]'],
  ['자동', 'bg-[#ffffbc]'], ['자동', 'bg-[#f2f2f2]'], ['자동', 'bg-white'], ['시험', 'bg-[#f2f2f2]'],
];

function HScroll() {
  return (
    <div className="h-[16px] shrink-0 flex bg-[#f0f0f0] border border-[#999]">
      <div className="w-4 flex items-center justify-center border-r-2 border-[#777]"><svg width="5" height="8" viewBox="0 0 5 8"><path d="M5 0v8L0 4z" /></svg></div>
    </div>
  );
}

function MonitorWindow() {
  const tab = 'h-[17px] shrink-0 flex items-center';
  const idle = 'ml-px bg-gradient-to-b from-[#f4f4f4] to-[#c4c4c8] text-[#333]';
  return (
    <div className="absolute left-[43px] top-[81px] w-[916px] h-[491px] bg-[#b2b2b2] border-2 border-[#2a2a2a] outline outline-1 -outline-offset-2 outline-white overflow-hidden flex flex-col text-[12.9px] leading-none whitespace-nowrap">
      <div className="h-[18px] mt-[2px] shrink-0 flex justify-between bg-[#d3d3d3] pr-[3px]">
        <div className="w-[167px] h-full bg-white border border-[#222] rounded-t-md flex items-center pl-[5px] text-black">[3030] 시스템모니터</div>
        <div className="flex gap-[2px] pt-[2px]">
          <span className="w-3 h-3 bg-[#f4f4f4] border border-[#444]" /><span className="w-3 h-3 bg-[#111] border border-[#444]" /><span className="w-3 h-3 bg-[#f4f4f4] border border-[#444]" />
        </div>
      </div>
      <div className="w-[130px] flex flex-col shrink-0 pl-[3px] pt-[3px]">
        <div className="flex h-[17px] items-center font-bold text-[13px]">
          <div className={`w-[48px] bg-gradient-to-b from-[#222] to-[#555] text-white justify-center ${tab}`}>시스템</div>
          <div className={`w-[59px] justify-center ${tab} ${idle}`}>발생신호</div>
          <div className={`w-[61px] pl-[3px] ${tab} ${idle}`}>주문</div>
        </div>
        <div className="mt-px border-l-2 border-t-2 border-[#888] flex flex-col">
          <div className="flex h-[36px] bg-[#ececec] text-[#444] border-b border-[#999]">
            <div className="w-[45px] flex items-center justify-center border-r border-[#a8a8b0]">종류</div>
          </div>
          {signalRows.map(([t, bg], i) => (
            <div key={i} className="h-[17px] flex text-white">
              <div className={`w-[29px] flex items-center justify-center ${t === '시험' ? 'bg-[#808080]' : 'bg-[#ff6464]'}`}>{t}</div>
              <div className="w-[16px] bg-[#e8e8e8] border-r border-[#a8a8b0] flex items-center justify-center text-black text-[12px]">X</div>
              <div className={`flex-1 ${bg}`} />
            </div>
          ))}
          <div className="h-[2px] ml-[45px] bg-[#ffffbc]" />
          <HScroll />
        </div>
        <div className="h-[4px] mt-[5px] -ml-[3px] border-t border-[#777] bg-white" />
        <div className="flex h-[17px] mt-[3px] items-center font-bold text-[13px]">
          <div className={`w-[48px] bg-gradient-to-b from-[#222] to-[#555] text-white justify-center ${tab}`}>전체</div>
          <div className={`w-[47px] justify-center ${tab} ${idle}`}>체결</div>
          <div className={`w-[47px] pl-[3px] ${tab} ${idle}`}>미체결</div>
        </div>
        <div className="mt-[2px] border-l-2 border-t border-[#888] flex flex-col">
          <div className="flex h-[18px] bg-[#ececec] text-[#555] border-b border-[#999]">
            <div className="w-[30px] border-r border-[#a8a8b0]" />
            <div className="pl-[25px] flex items-center">시스템명</div>
          </div>
          {[0, 1].map((i) => (
            <div key={i} className={`flex h-[17px] ${i ? 'bg-white' : 'bg-[#f2f2f2]'}`}>
              <div className="w-[30px] border-r border-[#a8a8b0] flex items-center text-[#aaa] tracking-[-0.6px]">정/취</div>
              <div className="pl-1 flex items-center text-black tracking-[-0.3px]">나스닥 70분 차트</div>
            </div>
          ))}
          {['bg-white h-[33px]', 'bg-[#f2f2f2] h-[34px]', 'bg-white h-[34px]', 'bg-[#f2f2f2] h-[29px]'].map((c) => (
            <div key={c} className={`flex ${c}`}><div className="w-[30px] border-r border-[#a8a8b0]" /></div>
          ))}
          <HScroll />
        </div>
      </div>
      <div className="mt-[2px] h-[4px] shrink-0 bg-white border-y border-[#777]" />
      <div className="mt-[1px] mx-[2px] h-[14px] shrink-0 bg-[#d4d0c8] border border-[#888]" />
    </div>
  );
}

/* ------------------------------------------------------------------ */
/* Chart window                                                        */
/* ------------------------------------------------------------------ */

function ChartToolbar() {
  return (
    <div className="h-[24px] shrink-0 bg-[#b2b2b2] border-b border-black flex items-center text-[12.7px] leading-none whitespace-nowrap">
      <Chip className="w-2 h-5 ml-[1px] mr-[5px] rounded-sm"><svg width="4" height="6" viewBox="0 0 4 6"><path d="M4 0v6L0 3z" /></svg></Chip>
      <Sep />
      <div className="flex items-center w-[155px] shrink-0 gap-[4px] pl-px">
        <Combo text="MNQ,1" className="w-[109px] h-[19px] text-[13px]" />
        <Chip className="w-[18px] h-5 rounded-sm"><Magnifier /></Chip>
        <Chip className="w-[18px] h-5 rounded-sm"><Magnifier red /></Chip>
      </div>
      <div className="w-px" />
      <Sep />
      <div className="w-[2px]" />
      <div className="flex items-center w-[211px] shrink-0 gap-[3px]">
        <Chip className="w-[19px] h-5 rounded-sm">일</Chip>
        <Chip className="w-[19px] h-5 rounded-sm">주</Chip>
        <Chip className="w-[19px] h-5 rounded-sm">월</Chip>
        <Chip className="w-[19px] h-5 rounded-sm from-[#ffd0d0] to-[#f09090] border-[#c07070]">분</Chip>
        <Combo text="80" className="w-[43px] h-[19px]" />
        <Chip className="w-[19px] h-5 rounded-sm">틱</Chip>
        <Combo text="10" className="w-[55px] h-[19px]" />
      </div>
      <div className="w-[3px]" />
      <Sep />
      <div className="ml-[1px] w-[50px] h-5 shrink-0 border border-[#999] bg-[#bebebe] text-[#888] flex items-center justify-between px-[3px]">건수<Caret className="fill-[#999]" /></div>
      <div className="ml-px w-[65px] h-[19px] shrink-0 bg-white border border-[#8b93a3] flex items-center justify-end pr-px text-[12px] tracking-[-0.6px]">10000</div>
      <div className="pl-[2px] w-[17px] shrink-0">바</div>
      <Sep />
      <div className="flex items-center gap-[3px] ml-[3px]">
        <Chip className="w-[19px] h-5 rounded-sm"><svg width="16" height="14" viewBox="0 0 16 14"><path d="M1 5l5 3 9-6" fill="none" stroke="#e02020" strokeWidth="2" /><path d="M1 10h5l4-2 5-1M1 12l5-2" fill="none" stroke="#444" strokeWidth="1.5" /></svg></Chip>
        <Chip className="w-[19px] h-5 rounded-sm"><svg width="14" height="15" viewBox="0 0 14 15"><path d="M3 4v8M6.5 5v8M10 1v10" stroke="#444" strokeWidth="2" /><path d="M1 3h3M4 13h4M8 3h2M11 13h3M6 1v2" stroke="#e02020" strokeWidth="2" /></svg></Chip>
        <Chip className="w-[19px] h-5 rounded-sm"><svg width="14" height="14" viewBox="0 0 14 14"><path d="M2 8v5M5 6v6M8 4v7M11 1v8" stroke="#555" strokeWidth="2.2" /></svg></Chip>
        <Chip className="w-[19px] h-5 rounded-sm"><svg width="15" height="14" viewBox="0 0 15 14"><path d="M4 1l4 4H5.5v5h-3V5H0z" fill="#333" /><path d="M11 13l-3-4h2V4h2v5h2z" fill="#ddd" stroke="#444" /></svg></Chip>
      </div>
      <div className="w-1" />
      <Sep />
      <div className="flex items-center gap-[3px] ml-px">
        <Chip className="w-[19px] h-5 rounded-sm"><svg width="15" height="15" viewBox="0 0 15 15"><path d="M2 1h6l3 3v4M2 1v12h5" fill="none" stroke="#555" strokeWidth="1.2" /><text x="7" y="14" fontSize="10" fontWeight="700" fill="#333">D</text></svg></Chip>
        <Chip className="w-[19px] h-5 rounded-sm"><svg width="15" height="15" viewBox="0 0 15 15"><path d="M4 0l3 3 3-3M2 3h10v8H2z" fill="#c8dce8" stroke="#556" /><text x="7" y="14" fontSize="10" fontWeight="700" fill="#333">R</text></svg></Chip>
      </div>
      <div className="w-1" />
      <Sep />
      <div className="flex items-center gap-[3px] ml-[3px]">
        <Chip className="w-[19px] h-5 rounded-sm"><svg width="14" height="15" viewBox="0 0 14 15"><path d="M1 1h8l4 4v9H1z" fill="#fff" stroke="#555" /><path d="M4 5v6" stroke="#2050d0" strokeWidth="2.5" /><path d="M9 6l1.5 3L9 12 7.5 9z" fill="#e02020" /></svg></Chip>
        <Chip className="w-[19px] h-5 rounded-sm"><svg width="15" height="15" viewBox="0 0 15 15"><path d="M1 2h10v9H1zM1 5h10M1 8h10M4.5 2v9M8 2v9" fill="#fff" stroke="#444" /><path d="M14 9v5H9z" fill="#e02020" /></svg></Chip>
        <Chip className="w-[32px] h-5 rounded-sm">개별</Chip>
      </div>
      <div className="w-[3px]" />
      <Sep />
      <Chip className="ml-[2px] w-[45px] h-[20px] from-[#e6e8ff] to-[#a8aee8] border-[#9098c0] font-medium">업로드</Chip>
    </div>
  );
}

/* Glyphs for the drawing-tool buttons, on a 14 x 14 grid */
const R = '#e00000';
const N = '#0000b0';
const B = '#3232c8';

function sq(x: number, y: number, c = R, s = 3) {
  return <rect x={x} y={y} width={s} height={s} fill={c} />;
}

function letter(x: number, y: number, t: string, c = R, s = 7) {
  return <text x={x} y={y} fontSize={s} fontWeight="700" fill={c} fontFamily="Liberation Sans, sans-serif">{t}</text>;
}

const toolGlyphs: React.ReactNode[] = [
  <g><path d="M14 0v14H0z" fill="#909090" /><path d="M6 1L2 5h2c0 3 2 4 3 4C6 7 6 6 6 5h2zM9 13l4-4h-2c0-2-1-4-3-4 1 2 1 3 1 4H7z" fill={N} /></g>,
  <g fill="none" stroke={B}><rect x=".5" y=".5" width="4" height="13" rx="1" /><rect x="9.5" y=".5" width="4" height="13" rx="1" /><path d="M2.5 3v8M11.5 3v8" stroke={R} strokeDasharray="2 1" /><path d="M4 4h6M4 10h6" stroke={R} strokeWidth="2" /></g>,
  <path d="M4 1v11l3-3 2 4 2-1-2-4h4z" fill={N} />,
  <g fill="none" stroke="#fff"><path d="M2 2h4M2 2v4h4M2 13L12 1M9 4h3v4M8 9h3v4" /></g>,
  <g fill="none" stroke="#fff"><path d="M2 2l3 3 6-3M3 7l5-3 4 3-2 5H5l-2-3zM5 9h4M6 7h4" /></g>,
  <g fill="none" stroke="#fff"><path d="M2 1v5M5 1v5M8 1v4M2 6l4 6h4l3-4-3-3H6zM6 8h4" /></g>,
  <g fill="none"><path d="M1 0v13h13" stroke={B} strokeWidth="1.3" /><path d="M2 6l3-4 4 9 5-5" stroke="#000" /><path d="M7 0v10" stroke={R} strokeWidth="1.5" /></g>,
  <g><path d="M2 6.5h10" stroke={N} />{sq(1, 5)}{sq(10, 5)}</g>,
  <g><path d="M6.5 2v10" stroke={N} />{sq(5, 1)}{sq(5, 10)}</g>,
  <g><path d="M3.5 2v3M2 5h3v4H2zM2 13h10M11.5 13V5" stroke={N} fill={N} /><path d="M10 1h3v4h-3z" fill={R} /></g>,
  <g><path d="M2 12L12 2" stroke={N} />{sq(1, 10)}{sq(10, 1)}</g>,
  <g>{letter(1, 6, 'A')}<path d="M2 13L13 1" stroke={B} />{letter(8, 14, 'T')}</g>,
  <g><path d="M1 1.5h12M3 3.5h10M4 5.5h9" stroke={R} /><path d="M4 8.5h9M3 10.5h10M1 12.5h12" stroke={BLUE} /></g>,
  <g>{letter(1, 6, 'f/L')}<path d="M2.5 8v5M5.5 8v5M8.5 8v5M12.5 8v5" stroke={N} /></g>,
  <g>{letter(1, 6, 'f/f')}<path d="M2 13L9 3M4 12c5-1 7-3 8-6M5 9c3 0 5 1 7 4" stroke={N} fill="none" /></g>,
  <g>{letter(2, 6, 'f o')}<path d="M1 13c2-5 9-7 12 0M2 8l10 5M12 7L2 13M7 6v4" stroke={N} fill="none" /></g>,
  <g>{letter(1, 7, 'f/R')}<path d="M1 9.5h12M1 12.5h12" stroke={N} /></g>,
  <g stroke={N}><path d="M1 8L8 1M3 12L13 2M7 13L13 6M2 8l4 4" strokeWidth=".9" /></g>,
  <g>{letter(1, 6, 'E')}<path d="M2 12l5-6 3 3 4-5" stroke={N} fill="none" />{sq(1, 10, R, 2.5)}{sq(6, 5, R, 2.5)}</g>,
  <g>{letter(1, 6, 'E')}<path d="M2 12l5-6 3 3 4-5" stroke={N} fill="none" />{sq(1, 10, R, 2.5)}{sq(6, 5, R, 2.5)}{sq(9, 8, R, 2.5)}</g>,
  <g><path d="M12 2L5 10" stroke="#208070" strokeWidth="3.4" /><path d="M5 9l-2 4 3-1z" fill="#c09020" /><path d="M3 13.5h9" stroke="#bbb" /></g>,
  <g>{letter(1, 6, 'L')}<path d="M3 13L12 4" stroke={N} /><path d="M3.5 10v4M6.5 7v5M9.5 5v5M12.5 1v9" stroke={R} /></g>,
  <g>{letter(0, 6, 'D')}<path d="M2 13L11 2M6 13l7-9M1 10l4-4" stroke={N} /><path d="M6.5 6v6M9.5 3v7M12.5 1v9" stroke={R} /></g>,
  <g>{letter(0, 6, 'E')}<path d="M2 13L11 2M6 13l7-9" stroke={N} /><path d="M6.5 6v6M9.5 3v8M12.5 1v9" stroke={R} /></g>,
  <g>{letter(0, 6, 'R')}<path d="M2 13L11 2M5 13l8-9M1 11l6-6" stroke={N} /><path d="M4.5 7v6M7.5 4v7M10.5 2v7" stroke={R} /></g>,
  <g><path d="M1 1.5h12M7 5.5h6M7 8.5h6M1 12.5h12" stroke={N} />{letter(1, 10, 'Q', R, 8)}</g>,
  <text x="7" y="12" fontSize="14" fontWeight="700" textAnchor="middle" fill={B} fontFamily="Liberation Serif, serif">T</text>,
  <path d="M6.5 1l5 6H9v6H4V7H1.5z" fill={B} />,
  <path d="M6.5 13l5-6H9V1H4v6H1.5z" fill={B} />,
  <g><rect x="1.5" y="1.5" width="11" height="11" fill="#fff" stroke={B} /><rect x="3" y="3" width="8" height="8" fill="#f06464" /></g>,
  <g><circle cx="7" cy="7" r="5.8" fill="#fff" stroke={B} /><circle cx="7" cy="7" r="3.8" fill="#f06464" /></g>,
  <g fill="none" stroke={B}><circle cx="7" cy="7" r="5.8" fill="#fff" /><path d="M4.5 5h1.5M8.5 5H10M4 8l3 2.5L10 8" /></g>,
  <g><circle cx="7" cy="7" r="5.8" fill="#fff" stroke={B} /><path d="M5.5 5L7.5 4v6.5" fill="none" stroke={B} /></g>,
];

function ToolColumn() {
  return (
    <div className="w-[28px] shrink-0 bg-[#b2b2b2] border-l border-white border-r border-r-white flex flex-col items-center pt-[3px]">
      {toolGlyphs.map((g, i) => {
        const off = i >= 3 && i <= 5;
        return (
          <div key={i} className="h-[25px] shrink-0 flex items-start">
            <div className={`w-[18px] h-[18px] border flex items-center justify-center ${i === 2 ? 'bg-white border-[#666] outline outline-2 outline-[#e8e8e8] translate-y-[1px]' : off ? 'bg-[#a0a0a0] border-[#e0e0e0]' : 'bg-[#f0f0f0] border-[#707070]'}`}>
              <svg width="14" height="14" viewBox="0 0 14 14">{g}</svg>
            </div>
          </div>
        );
      })}
    </div>
  );
}

const histogram = [9, 10, 11, 12, 11, 9, 7, 4, 3, 2, 2, 2, 3, 4, 3, 4, 2, 3, 3, 5, 6, 7, 7, 8, 8, 9, 9, 9, 11, 12, 13, 15, 19, 20, 18, 18, 20, 20, 18, 17, 17, 18, 17, 18, 19, 20, 20, 21, 22, 24, 25, 25, 26, 26, 26, 27, 27, 26, 26, 28, 28, 30, 32, 34, 35, 34, 33, 32, 30, 33];

function NavStrip() {
  const btn = 'h-full shrink-0 flex items-center justify-center border-r border-white/70 bg-[#b8b8b8]';
  return (
    <div className="h-[20px] shrink-0 flex items-stretch bg-[#b2b2b2]">
      <div className="w-[35px] shrink-0 flex flex-col justify-center gap-[3px] px-[3px]">
        <div className="h-[3px] border border-[#e8e8e8] border-b-[#888]" /><div className="h-[3px] border border-[#e8e8e8] border-b-[#888]" />
      </div>
      <div className={`w-[16px] ${btn}`}><svg width="4" height="8" viewBox="0 0 4 8"><path d="M4 0v8L0 4z" /></svg></div>
      <div className="w-[340px] shrink-0 bg-[#c0c0c0] flex">
        <svg width="340" height="20" viewBox="0 0 340 20">
          <path d={`M0 20${histogram.map((v, i) => `L${(i * 4.7).toFixed(1)} ${(20 - v * 0.55).toFixed(1)}h4.7`).join('')}V20z`} fill="#505050" />
          <rect x="326" y="0" width="10" height="20" fill="#3a3a3a" />
          <rect x="324.5" y=".5" width="3" height="18" fill="#fff" stroke="#000" /><rect x="335" y=".5" width="3" height="18" fill="#fff" stroke="#000" />
        </svg>
      </div>
      <div className={`w-[17px] ${btn}`}><svg width="4" height="6" viewBox="0 0 4 6"><path d="M0 0l4 3-4 3z" /></svg></div>
      <div className={`w-[18px] ${btn}`}><svg width="8" height="7" viewBox="0 0 8 7"><path d="M4 0v7L0 3.5zM8 0v7L4 3.5z" /></svg></div>
      <div className={`w-[18px] ${btn}`}><svg width="8" height="7" viewBox="0 0 8 7"><path d="M0 0l4 3.5L0 7zM4 0l4 3.5L4 7z" /></svg></div>
      <div className="w-[53px] h-[18px] mt-px shrink-0 bg-white border border-[#777] flex items-center justify-end pr-1 text-[12px] leading-none">67</div>
      <svg className="shrink-0" width="108" height="20" viewBox="0 0 108 20">
        <path d="M8.5 4v12L3.5 10zM10.5 4v12l5-6z" />
        <path d="M22 4v12l5-5v-2zM33 4v12l-5-5v-2zM26 8h3v4h-3z" />
        <circle cx="45" cy="10" r="5" fill="none" stroke="#000" strokeWidth="1.2" /><path d="M42 10h6M45 7v6" stroke="#000" strokeWidth="1.2" />
        <circle cx="63.5" cy="10" r="5" fill="none" stroke="#ddd" strokeWidth="1.2" /><path d="M60.5 10h6" stroke="#ddd" strokeWidth="1.2" />
        <rect x="76" y="4.500" width="10" height="11" fill="#fff" stroke="#000" /><path d="M78 7l6 6M84 7l-6 6" stroke="#000" strokeDasharray="2 1.5" />
        <rect x="94" y="4.500" width="10" height="11" fill="#fff" stroke="#000" /><path d="M96 7l6 6M102 7l-6 6" stroke="#000" />
      </svg>
    </div>
  );
}

function VDiv({ className = 'w-[3px]' }: { className?: string }) {
  return <div className={`${className} shrink-0 bg-[#a8a8a8] border-l border-[#d8d8d8]`} />;
}

function HDiv() {
  return <div className="h-[4px] shrink-0 bg-[#b2b2b2] border-t border-[#d8d8d8] border-b border-b-[#8a8a8a]" />;
}

function ChartWindow() {
  return (
    <div className="absolute left-[163px] top-[91px] w-[1738px] h-[894px] bg-[#b2b2b2] border-2 border-[#2a2a2a] flex flex-col overflow-hidden">
      <div className="h-[19px] shrink-0 flex items-end justify-between bg-[#d3d3d3] border-t border-white border-b border-b-[#222]">
        <svg width="352" height="17" viewBox="0 0 352 17">
          <path d="M0 4Q0 1 4 1H337Q341 1 343 4L351 17H0z" fill="#6e6e70" stroke="#222" />
          <text x="7" y="13.5" fontSize="12.5" fill="#f4f4f4" fontFamily={FONT} textLength="288" lengthAdjust="spacingAndGlyphs">[3010] 연결_Micro E-mini Nasdaq100-202409 - 80분</text>
          <path d="M302 9h5M305 6h4v2M305 12h4v-2M320 9h-4M312 6h4l2 3-2 3h-4M309 7v4M314 7v4" fill="none" stroke="#ddd" strokeWidth="1.2" />
          <path d="M328.5 5l7 8M335.5 5l-7 8" stroke="#fff" strokeWidth="2.2" />
        </svg>
        <svg className="mr-[7px] mb-[2px]" width="40" height="12" viewBox="0 0 40 12">
          {[0, 14, 28].map((x) => <rect key={x} x={x + 0.5} y=".5" width="10.5" height="11" fill="#ececec" stroke="#444" />)}
          <path d="M3 9h5" stroke="#000" strokeWidth="2" /><path d="M17 3h6v6h-6zM17 3.5h6" fill="none" stroke="#000" strokeWidth="1.5" /><path d="M31 3l5 6M36 3l-5 6" stroke="#000" strokeWidth="1.5" />
        </svg>
      </div>
      <div className="flex flex-1">
        <div className="w-[1706px] shrink-0 flex flex-col">
          <ChartToolbar />
          <div className="flex pl-px"><ChartA1 /><VDiv /><ChartA2 /><VDiv className="w-[4px]" /><ChartA3 /></div>
          <HDiv />
          <div className="flex pl-px">
            <ChartB1 /><VDiv />
            <div className="flex flex-col"><ChartB2 /><NavStrip /></div>
            <VDiv className="w-[4px]" /><ChartB3 />
          </div>
          <HDiv />
          <div className="flex pl-px"><ChartC1 /><VDiv className="w-[4px]" /><ChartC2 /><VDiv className="w-[4px]" /><ChartC3 /></div>
        </div>
        <ToolColumn />
      </div>
    </div>
  );
}

/* ------------------------------------------------------------------ */
/* Taskbar                                                             */
/* ------------------------------------------------------------------ */

function Taskbar() {
  const cell = 'w-[49px] shrink-0 flex items-center justify-center';
  return (
    <div className="absolute left-0 top-[1040px] w-[1920px] h-[40px] bg-gradient-to-r from-[#e8d3dc] via-[#ebd3d6] to-[#edd8dd] flex items-center text-[#222]">
      <div className="w-12 shrink-0 flex items-center justify-center">
        <svg width="16" height="16" viewBox="0 0 16 16"><path d="M0 2.2L6.5 1.3V7.6H0zM7.3 1.2L16 0v7.6H7.3zM0 8.4h6.5v6.3L0 13.8zM7.3 8.4H16V16l-8.7-1.2z" /></svg>
      </div>
      <div className="w-[49px] shrink-0 flex items-center justify-center">
        <svg width="24" height="24" viewBox="0 0 24 24" fill="none" stroke="#111" strokeWidth="2.2"><circle cx="14" cy="9" r="7.5" /><path d="M8.5 14.5L2 22" /></svg>
      </div>
      <div className="w-[20px] pl-[5px]"><Grip className="bg-[#222]" /></div>
      <div className="w-[29px] shrink-0 text-[12.5px] leading-none">주소</div>
      <div className="w-[227px] h-[22px] shrink-0 bg-white border border-[#b8b0b4] flex items-stretch justify-end">
        <div className="w-5 flex items-center justify-center"><svg width="9" height="6" viewBox="0 0 9 6"><path d="M.5 .5l4 4 4-4" fill="none" stroke="#444" strokeWidth="1.2" /></svg></div>
        <div className="w-[18px] border-l border-[#ccc] flex items-center justify-center"><svg width="12" height="12" viewBox="0 0 12 12"><path d="M9 3a4.5 4.5 0 1 1-5-1M3 0v4h4" fill="none" stroke="#666" strokeWidth="1.5" /></svg></div>
      </div>
      <div className="w-[29px] pl-[12px] shrink-0"><Grip className="bg-[#222]" /></div>
      <div className={cell}><svg width="24" height="24" viewBox="0 0 24 24"><circle cx="12" cy="12" r="10" fill="#0a9ee0" /><circle cx="7" cy="7" r="6" fill="#0a9ee0" /><circle cx="17" cy="17" r="6" fill="#0a9ee0" /><text x="12" y="17.5" fontSize="15" fontWeight="700" fill="#fff" textAnchor="middle" fontFamily="Liberation Sans, sans-serif">S</text></svg></div>
      <div className={cell}><svg width="24" height="24" viewBox="0 0 24 24"><rect width="24" height="24" fill="#183e88" /><path d="M3 11c8 0 12-3 14-6l-2-1 7-3v7l-2-1C16 11 10 13 3 11z" fill="#e02020" /><text x="12" y="21" fontSize="12" fontWeight="700" fontStyle="italic" fill="#fff" textAnchor="middle" fontFamily="Liberation Serif, serif">YT</text></svg></div>
      <div className={cell}><svg width="24" height="24" viewBox="0 0 24 24"><path d="M12 0l12 5v14l-12 5L0 19V5z" fill="#7a30c8" /><path d="M12 0l12 5-12 5L0 5z" fill="#b888f0" /><path d="M12 10v14l12-5V5z" fill="#5a18a0" /><text x="6" y="18" fontSize="9" fontWeight="700" fill="#1a0030" textAnchor="middle">友</text><text x="18" y="18" fontSize="10" fontWeight="700" fill="#20063a" textAnchor="middle">Y</text></svg></div>
      <div className={cell}><svg width="25" height="24" viewBox="0 0 25 24"><circle cx="12.5" cy="12" r="12" fill="#1a7cc8" /><path d="M1 9C3 2 9 0 13 0c7 0 12 5 12 11 0 4-3 6-7 6-3 0-4-1-4-2 1-1 2-3 0-5-3-3-9-3-13-1z" fill="#38c8a0" /><circle cx="7" cy="17" r="6.5" fill="#5a4638" /><circle cx="8" cy="20" r="3" fill="#d8d0c8" /></svg></div>
      <div className={cell}><svg width="24" height="24" viewBox="0 0 24 24"><path d="M11 5c7-1 12 4 10 10-1 4-5 2-6 4s-1 4-5 4C4 23 0 19 1 14c1-5 5-8 10-9z" fill="#c8e0ee" stroke="#7898a8" /><circle cx="6" cy="12" r="2" fill="#e04040" /><circle cx="11" cy="9" r="2" fill="#40a040" /><circle cx="5" cy="17" r="2" fill="#e0a020" /><circle cx="10" cy="19" r="2" fill="#4060d0" /><path d="M21 1l3 2-8 18-2-1z" fill="#d89840" /></svg></div>
      <div className={cell}><svg width="24" height="24" viewBox="0 0 24 24"><rect width="24" height="24" rx="5" fill="#1e8c3c" /><path d="M7 5v14M17 5v14M7 12h10" stroke="#fff" strokeWidth="4" /></svg></div>
      <div className={cell}><svg width="24" height="24" viewBox="0 0 24 24"><rect width="24" height="24" fill="#f04438" /><path d="M9 7l5 5-5 5-5-5zM13 8l2-1 5 5-5 5-2-1 3-4z" fill="#fff" /></svg></div>
      <div className={cell}><svg width="24" height="24" viewBox="0 0 24 24"><circle cx="12" cy="13" r="10.5" fill="#f8703c" /><path d="M15 1c5 3 8 8 7 13-1 3-3 5-5 6 3-6 1-11-4-13z" fill="#ffc828" /><circle cx="12" cy="13" r="4.8" fill="#7038b0" /><path d="M2 8c3-2 6-1 8 1l-2 4z" fill="#f85020" /></svg></div>
      <div className={cell}><svg width="24" height="24" viewBox="0 0 24 24"><circle cx="12" cy="12" r="11" fill="#d8ecf4" stroke="#8098a8" strokeWidth="1.5" /><path d="M12 12V2a10 10 0 0 1 10 10z" fill="#f0d898" /><path d="M12 3v9h8" fill="none" stroke="#345" strokeWidth="1.5" /></svg></div>
      <div className="w-[160px] h-full ml-px shrink-0 bg-[#f8eff1] border-b-2 border-[#28a0cc] flex items-center pl-[9px] text-[12.8px] leading-none">
        <svg width="24" height="24" viewBox="0 0 24 24"><rect width="24" height="24" fill="#7a3cc8" /><path d="M12 0h12v24z" fill="#a070e0" /><text x="8" y="14" fontSize="15" fontWeight="700" fill="#1c0838" textAnchor="middle" fontFamily="Liberation Sans, sans-serif">Y</text><text x="14" y="22" fontSize="5.5" fontWeight="700" fill="#e8d8ff" textAnchor="middle">TRADER</text></svg>
        <span className="pl-[5px]">예스트레이더</span>
      </div>
      <div className="flex-1" />
      <div className="w-[391px] shrink-0 flex items-center leading-none">
        <div className="w-[16px]"><Grip className="bg-[#222]" /></div>
        <div className="w-[31px] text-[12.5px]">링크</div>
        <div className="w-[24px] h-[28px] text-[14px] text-[#4050a0] -mt-1">»</div>
        <svg width="24" height="16" viewBox="0 0 24 16"><rect x="1" y="1" width="20" height="14" rx="2" fill="none" stroke="#111" strokeWidth="2" /><path d="M21 4h2v9q0 2-2 2" fill="none" stroke="#111" strokeWidth="1.5" /><path d="M4 4.500h14" stroke="#111" strokeWidth="2" /><rect x="4.500" y="8" width="4" height="4" fill="none" stroke="#111" strokeWidth="1.5" /><path d="M11 8.500h7M11 11.500h7" stroke="#111" strokeWidth="1.5" /></svg>
        <svg className="ml-[26px]" width="13" height="8" viewBox="0 0 13 8"><path d="M1 7l5.500-6L12 7" fill="none" stroke="#222" strokeWidth="1.5" /></svg>
        <svg className="ml-[9px]" width="16" height="16" viewBox="0 0 16 16"><rect width="16" height="16" rx="2" fill="#34488c" /><path d="M8 3v8M5 8.500l3 3.500 3-3.500" fill="none" stroke="#fff" strokeWidth="1.8" /></svg>
        <svg className="ml-[8px]" width="17" height="12" viewBox="0 0 17 12"><path d="M4 11a3 3 0 0 1 0-6 5 5 0 0 1 9-1 3.600 3.600 0 0 1 0 7z" fill="#888" stroke="#333" strokeWidth="1" /><path d="M4 11a3 3 0 0 1 3-5l6 5z" fill="#eee" /></svg>
        <svg className="ml-[7px]" width="17" height="15" viewBox="0 0 17 15"><path d="M4.500 2.500h11v8h-11zM7 13.500h6M10 10v4M1 1h3v3H1zM2.500 4v8h3" fill="none" stroke="#222" strokeWidth="1.2" /></svg>
        <svg className="ml-[7px]" width="17" height="14" viewBox="0 0 17 14"><path d="M1 5h2.500L7 1.500v11L3.500 9H1zM9 5q1.500 2 0 4M11.500 3q3 4 0 8M14 1q4.500 6 0 12" fill="none" stroke="#222" strokeWidth="1.2" /></svg>
        <span className="ml-[7px] w-[20px] text-[18px] text-[#111]">A</span>
        <div className="w-[78px] flex flex-col items-center gap-[6px] text-[12px] tracking-[-0.1px] whitespace-nowrap"><span>오전 7:09</span><span>2024-09-17</span></div>
        <svg className="ml-[16px]" width="17" height="17" viewBox="0 0 17 17"><path d="M0 0h17v13h-6l-3 4-2-4H0z" fill="#111" /><path d="M3 3.500h11M3 6.500h11M3 9.500h7" stroke="#fff" strokeWidth="1.2" /></svg>
      </div>
    </div>
  );
}

export default function App() {
  return (
    <div className="w-[3840px] h-[2160px] bg-white overflow-hidden [font-family:'Noto_Sans_CJK_KR',sans-serif]">
      <div className="relative w-[1920px] h-[1080px] overflow-hidden bg-[#333]">
        <div className="h-[6px] w-full bg-[linear-gradient(90deg,#7c4a86_0,#8a4c80_8%,#9a5590_16%,#5a7cb4_18%,#6a6aa8_26%,#3a78b8_36%,#5a9cc8_44%,#1a6cae_48%,#2888c0_56%,#58b0cc_64%,#2484b8_76%,#1c9cc4_90%,#1a8cc0_100%)]" />
        <div className="absolute left-[1915px] top-0 w-[5px] h-[1040px] bg-[linear-gradient(180deg,#1490c4_0,#2a86b8_9%,#1c5c9c_13%,#185a98_23%,#98a8cc_24%,#5c6cac_27%,#6c609c_34%,#b8b0c8_37%,#8c5088_40%,#a85080_48%,#e07080_53%,#b8a8c0_58%,#c03a58_62%,#c8304c_80%,#c8385c_100%)]" />
        <div className="absolute left-[2px] top-[4px] w-[1913px] h-[1036px] border-2 border-[#28282c] border-b-0 bg-[#5a5a5e] flex flex-col">
          <TitleBar />
          <MenuBar />
          <AppToolbar />
          <div className="flex-1 bg-[#616870] border-r border-white" />
          <BottomBars />
          <div className="h-px shrink-0 bg-[#28282c]" />
        </div>
        <OrderWindow />
        <BalanceWindow />
        <MonitorWindow />
        <ChartWindow />
        <svg className="absolute left-[1560px] top-[105px] pointer-events-none" width="160" height="500" viewBox="1560 105 160 500" fill="none" stroke="#000" strokeWidth="4.6">
          <ellipse cx="1636" cy="222.8" rx="67" ry="109" />
          <ellipse cx="1612.3" cy="502.5" rx="38.3" ry="91" />
        </svg>
        <Taskbar />
      </div>
    </div>
  );
}
